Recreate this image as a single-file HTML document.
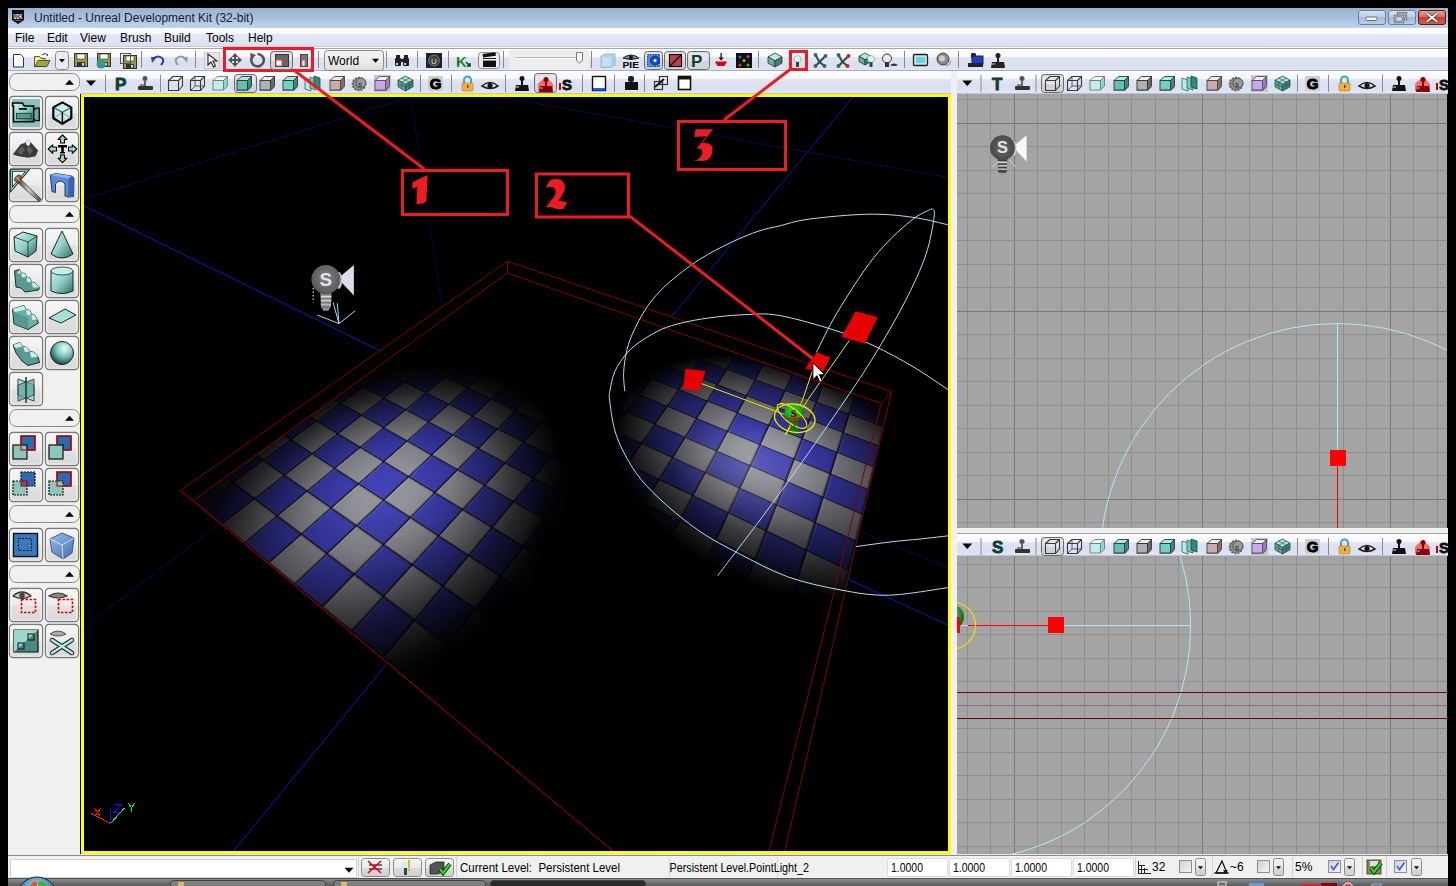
<!DOCTYPE html><html><head><meta charset="utf-8"><style>
html,body{margin:0;padding:0;width:1456px;height:886px;overflow:hidden;background:#000;font-family:"Liberation Sans",sans-serif;font-size:12px;color:#000}
.a{position:absolute;box-sizing:border-box}
.tb{background:linear-gradient(#fdfdfe 0,#f6f7fb 36%,#e2e6f3 38%,#dadfef 70%,#e1e6f3 100%)}
.sep{position:absolute;width:1px;background:#8c8c8c}
.pbtn{position:absolute;box-sizing:border-box;border:1px solid #8a8a8a;border-radius:3px;background:linear-gradient(#f4f4f4,#e4e4e4 55%,#d8d8d8)}
.hdr{position:absolute;box-sizing:border-box;border:1px solid #8f8f8f;border-radius:7px;background:#f0f0f0}
.txt{position:absolute;white-space:nowrap;line-height:1}
svg{position:absolute;overflow:visible}
</style></head><body>
<div class="a" style="left:8px;top:8px;width:1440px;height:20px;background:linear-gradient(#98b1ce,#bcd4ec)"></div>
<div class="txt" style="left:34px;top:12px;font-size:12px;color:#1a1a30">Untitled - Unreal Development Kit (32-bit)</div>
<div class="a" style="left:8px;top:28px;width:1440px;height:19px;background:linear-gradient(#ffffff 0,#f7f8fc 32%,#e3e7f3 36%,#dde2f1 100%);border-bottom:1px solid #c5cbe0"></div>
<div class="txt" style="left:15px;top:32px">File</div>
<div class="txt" style="left:47px;top:32px">Edit</div>
<div class="txt" style="left:80px;top:32px">View</div>
<div class="txt" style="left:120px;top:32px">Brush</div>
<div class="txt" style="left:164px;top:32px">Build</div>
<div class="txt" style="left:206px;top:32px">Tools</div>
<div class="txt" style="left:248px;top:32px">Help</div>
<div class="a" style="left:8px;top:47px;width:1440px;height:1px;background:#fbfbfb"></div>
<div class="a" style="left:8px;top:48px;width:1440px;height:1px;background:#a6a6a6"></div>
<div class="a tb" style="left:8px;top:49px;width:1440px;height:22px;"></div>
<div class="a" style="left:8px;top:70px;width:1440px;height:1px;background:#a9b0c4"></div>
<div class="a" style="left:8px;top:71px;width:72px;height:784px;background:#f0f0f0"></div>
<div class="a tb" style="left:80px;top:71px;width:871px;height:23px;border-bottom:1px solid #b9c4de"></div>
<div class="a" style="left:951px;top:71px;width:6px;height:784px;background:#f0f0f0"></div>
<div class="a tb" style="left:957px;top:71px;width:491px;height:23px;border-bottom:1px solid #b9c4de"></div>
<div class="a" style="left:957px;top:528px;width:491px;height:6px;background:#f0f0f0;border-bottom:1px solid #a0a0a0"></div>
<div class="a tb" style="left:957px;top:534px;width:491px;height:22px;border-bottom:1px solid #b9c4de"></div>
<svg width="80" height="800" style="left:0;top:60px" viewBox="0 60 80 800"><defs><linearGradient id="lbtn" x1="0" y1="0" x2="0" y2="1"><stop offset="0" stop-color="#f6f6f6"/><stop offset=".5" stop-color="#ececec"/><stop offset=".52" stop-color="#e2e2e2"/><stop offset="1" stop-color="#d8d8d8"/></linearGradient><linearGradient id="teal" x1="0" y1="0" x2="1" y2="1"><stop offset="0" stop-color="#d8f6f2"/><stop offset=".5" stop-color="#8ed0c6"/><stop offset="1" stop-color="#2a6a62"/></linearGradient><linearGradient id="pen" x1="0" y1="0" x2="1" y2="0"><stop offset="0" stop-color="#333"/><stop offset=".5" stop-color="#ccc"/><stop offset="1" stop-color="#444"/></linearGradient><radialGradient id="tealsph" cx="60%" cy="30%" r="70%"><stop offset="0" stop-color="#f0fffc"/><stop offset=".5" stop-color="#7ac8bc"/><stop offset="1" stop-color="#1a4a44"/></radialGradient><linearGradient id="blu" x1="0" y1="0" x2="1" y2="1"><stop offset="0" stop-color="#8ab8f0"/><stop offset="1" stop-color="#2a5aa8"/></linearGradient></defs><rect x="9.5" y="73.5" width="70" height="17" rx="7" fill="#f0f0f0" stroke="#8c8c8c"/><polygon points="65.0,84.75 74.0,84.75 69.5,79.75" fill="#000"/><rect x="9.5" y="205.5" width="70" height="17" rx="7" fill="#f0f0f0" stroke="#8c8c8c"/><polygon points="65.0,216.75 74.0,216.75 69.5,211.75" fill="#000"/><rect x="9.5" y="409.5" width="70" height="17" rx="7" fill="#f0f0f0" stroke="#8c8c8c"/><polygon points="65.0,420.75 74.0,420.75 69.5,415.75" fill="#000"/><rect x="9.5" y="505.5" width="70" height="17" rx="7" fill="#f0f0f0" stroke="#8c8c8c"/><polygon points="65.0,516.75 74.0,516.75 69.5,511.75" fill="#000"/><rect x="9.5" y="565.5" width="70" height="17" rx="7" fill="#f0f0f0" stroke="#8c8c8c"/><polygon points="65.0,576.75 74.0,576.75 69.5,571.75" fill="#000"/><rect x="9.5" y="96.5" width="33" height="33" rx="3.5" fill="url(#lbtn)" stroke="#7a7a7a" stroke-width="1.3"/><rect x="10.8" y="97.8" width="30.4" height="30.4" rx="2.5" fill="none" stroke="#fff" stroke-width=".8"/><rect x="45.5" y="96.5" width="33" height="33" rx="3.5" fill="url(#lbtn)" stroke="#7a7a7a" stroke-width="1.3"/><rect x="46.8" y="97.8" width="30.4" height="30.4" rx="2.5" fill="none" stroke="#fff" stroke-width=".8"/><rect x="9.5" y="132.5" width="33" height="33" rx="3.5" fill="url(#lbtn)" stroke="#7a7a7a" stroke-width="1.3"/><rect x="10.8" y="133.8" width="30.4" height="30.4" rx="2.5" fill="none" stroke="#fff" stroke-width=".8"/><rect x="45.5" y="132.5" width="33" height="33" rx="3.5" fill="url(#lbtn)" stroke="#7a7a7a" stroke-width="1.3"/><rect x="46.8" y="133.8" width="30.4" height="30.4" rx="2.5" fill="none" stroke="#fff" stroke-width=".8"/><rect x="9.5" y="168.5" width="33" height="33" rx="3.5" fill="url(#lbtn)" stroke="#7a7a7a" stroke-width="1.3"/><rect x="10.8" y="169.8" width="30.4" height="30.4" rx="2.5" fill="none" stroke="#fff" stroke-width=".8"/><rect x="45.5" y="168.5" width="33" height="33" rx="3.5" fill="url(#lbtn)" stroke="#7a7a7a" stroke-width="1.3"/><rect x="46.8" y="169.8" width="30.4" height="30.4" rx="2.5" fill="none" stroke="#fff" stroke-width=".8"/><rect x="9.5" y="228.5" width="33" height="33" rx="3.5" fill="url(#lbtn)" stroke="#7a7a7a" stroke-width="1.3"/><rect x="10.8" y="229.8" width="30.4" height="30.4" rx="2.5" fill="none" stroke="#fff" stroke-width=".8"/><rect x="45.5" y="228.5" width="33" height="33" rx="3.5" fill="url(#lbtn)" stroke="#7a7a7a" stroke-width="1.3"/><rect x="46.8" y="229.8" width="30.4" height="30.4" rx="2.5" fill="none" stroke="#fff" stroke-width=".8"/><rect x="9.5" y="264.5" width="33" height="33" rx="3.5" fill="url(#lbtn)" stroke="#7a7a7a" stroke-width="1.3"/><rect x="10.8" y="265.8" width="30.4" height="30.4" rx="2.5" fill="none" stroke="#fff" stroke-width=".8"/><rect x="45.5" y="264.5" width="33" height="33" rx="3.5" fill="url(#lbtn)" stroke="#7a7a7a" stroke-width="1.3"/><rect x="46.8" y="265.8" width="30.4" height="30.4" rx="2.5" fill="none" stroke="#fff" stroke-width=".8"/><rect x="9.5" y="300.5" width="33" height="33" rx="3.5" fill="url(#lbtn)" stroke="#7a7a7a" stroke-width="1.3"/><rect x="10.8" y="301.8" width="30.4" height="30.4" rx="2.5" fill="none" stroke="#fff" stroke-width=".8"/><rect x="45.5" y="300.5" width="33" height="33" rx="3.5" fill="url(#lbtn)" stroke="#7a7a7a" stroke-width="1.3"/><rect x="46.8" y="301.8" width="30.4" height="30.4" rx="2.5" fill="none" stroke="#fff" stroke-width=".8"/><rect x="9.5" y="336.5" width="33" height="33" rx="3.5" fill="url(#lbtn)" stroke="#7a7a7a" stroke-width="1.3"/><rect x="10.8" y="337.8" width="30.4" height="30.4" rx="2.5" fill="none" stroke="#fff" stroke-width=".8"/><rect x="45.5" y="336.5" width="33" height="33" rx="3.5" fill="url(#lbtn)" stroke="#7a7a7a" stroke-width="1.3"/><rect x="46.8" y="337.8" width="30.4" height="30.4" rx="2.5" fill="none" stroke="#fff" stroke-width=".8"/><rect x="9.5" y="372.5" width="33" height="33" rx="3.5" fill="url(#lbtn)" stroke="#7a7a7a" stroke-width="1.3"/><rect x="10.8" y="373.8" width="30.4" height="30.4" rx="2.5" fill="none" stroke="#fff" stroke-width=".8"/><rect x="9.5" y="432.5" width="33" height="33" rx="3.5" fill="url(#lbtn)" stroke="#7a7a7a" stroke-width="1.3"/><rect x="10.8" y="433.8" width="30.4" height="30.4" rx="2.5" fill="none" stroke="#fff" stroke-width=".8"/><rect x="45.5" y="432.5" width="33" height="33" rx="3.5" fill="url(#lbtn)" stroke="#7a7a7a" stroke-width="1.3"/><rect x="46.8" y="433.8" width="30.4" height="30.4" rx="2.5" fill="none" stroke="#fff" stroke-width=".8"/><rect x="9.5" y="468.5" width="33" height="33" rx="3.5" fill="url(#lbtn)" stroke="#7a7a7a" stroke-width="1.3"/><rect x="10.8" y="469.8" width="30.4" height="30.4" rx="2.5" fill="none" stroke="#fff" stroke-width=".8"/><rect x="45.5" y="468.5" width="33" height="33" rx="3.5" fill="url(#lbtn)" stroke="#7a7a7a" stroke-width="1.3"/><rect x="46.8" y="469.8" width="30.4" height="30.4" rx="2.5" fill="none" stroke="#fff" stroke-width=".8"/><rect x="9.5" y="528.5" width="33" height="33" rx="3.5" fill="url(#lbtn)" stroke="#7a7a7a" stroke-width="1.3"/><rect x="10.8" y="529.8" width="30.4" height="30.4" rx="2.5" fill="none" stroke="#fff" stroke-width=".8"/><rect x="45.5" y="528.5" width="33" height="33" rx="3.5" fill="url(#lbtn)" stroke="#7a7a7a" stroke-width="1.3"/><rect x="46.8" y="529.8" width="30.4" height="30.4" rx="2.5" fill="none" stroke="#fff" stroke-width=".8"/><rect x="9.5" y="588.5" width="33" height="33" rx="3.5" fill="url(#lbtn)" stroke="#7a7a7a" stroke-width="1.3"/><rect x="10.8" y="589.8" width="30.4" height="30.4" rx="2.5" fill="none" stroke="#fff" stroke-width=".8"/><rect x="45.5" y="588.5" width="33" height="33" rx="3.5" fill="url(#lbtn)" stroke="#7a7a7a" stroke-width="1.3"/><rect x="46.8" y="589.8" width="30.4" height="30.4" rx="2.5" fill="none" stroke="#fff" stroke-width=".8"/><rect x="9.5" y="624.5" width="33" height="33" rx="3.5" fill="url(#lbtn)" stroke="#7a7a7a" stroke-width="1.3"/><rect x="10.8" y="625.8" width="30.4" height="30.4" rx="2.5" fill="none" stroke="#fff" stroke-width=".8"/><rect x="45.5" y="624.5" width="33" height="33" rx="3.5" fill="url(#lbtn)" stroke="#7a7a7a" stroke-width="1.3"/><rect x="46.8" y="625.8" width="30.4" height="30.4" rx="2.5" fill="none" stroke="#fff" stroke-width=".8"/><rect x="12" y="99" width="28" height="28" fill="#8bc0bc"/><path d="M12.5,103 H22.3 L24.3,106 H33.7 V121.7 H13.5 V106 H12.5 Z" fill="url(#teal)" stroke="#000" stroke-width="1.6"/><rect x="18.9" y="108" width="8" height="1.8" fill="#000"/><rect x="16.5" y="113.3" width="14.5" height="5.5" fill="#5a9a90" stroke="#0a2a28" stroke-width=".8"/><rect x="30" y="108.5" width="1.3" height="1.3" fill="#20ff20"/><path d="M33.7,110 L36,108.2 H39.2 V120.7 H36 L33.7,119 Z" fill="#6aaaa0" stroke="#000" stroke-width="1.3"/><g fill="#9ad8d0" opacity=".7"><circle cx="53" cy="104" r=".6"/><circle cx="56" cy="101.5" r=".6"/><circle cx="60" cy="100" r=".6"/><circle cx="64" cy="100" r=".6"/><circle cx="68" cy="101.5" r=".6"/><circle cx="71" cy="104" r=".6"/><circle cx="53" cy="122" r=".6"/><circle cx="56" cy="124.5" r=".6"/><circle cx="60" cy="126" r=".6"/><circle cx="64" cy="126" r=".6"/><circle cx="68" cy="124.5" r=".6"/><circle cx="71" cy="122" r=".6"/></g><polygon points="62.4,102.4 71.3,107.4 71.3,118.2 62.4,123.7 53.3,118.2 53.3,107.4" fill="#c8ecea" stroke="#000" stroke-width="2.2" stroke-linejoin="round"/><g stroke="#1a4a46" stroke-width=".9"><line x1="53.3" y1="107.4" x2="62.4" y2="112"/><line x1="71.3" y1="107.4" x2="62.4" y2="112"/><line x1="62.4" y1="112" x2="62.4" y2="123.7"/><line x1="53.3" y1="118.2" x2="71.3" y2="107.4" opacity=".5"/><line x1="71.3" y1="118.2" x2="53.3" y2="107.4" opacity=".5"/></g><line x1="62.4" y1="112" x2="62.4" y2="123.7" stroke="#000" stroke-width="1.4"/><path d="M12.9,154.6 Q16,150 21,144 L24.3,143.2 L27.9,139.3 L31.6,143.2 L38.1,150.5 L35.6,156.2 L28.3,157.8 L18.6,156.2 Z" fill="#3a3a3a"/><path d="M17,152 L22,146 L25,150 L21,155 Z M28,145 L33,150 L30,155 L27,150Z" fill="#666" opacity=".8"/><path d="M25.5,142 L27.9,139.3 L30.5,142.5 L29,146 L26.5,145 Z" fill="#d8f4f2"/><g fill="#9ad8cc" stroke="#000" stroke-width="1.1" stroke-linejoin="round"><polygon points="62.5,135 67,139.5 64.5,139.5 64.5,143 60.5,143 60.5,139.5 58,139.5"/><polygon points="62.5,162.7 67,158.2 64.5,158.2 64.5,155 60.5,155 60.5,158.2 58,158.2"/><polygon points="48.2,149 52.7,144.8 52.7,147 56.5,147 56.5,151 52.7,151 52.7,153.4"/><polygon points="76.8,149 72.3,144.8 72.3,147 68.5,147 68.5,151 72.3,151 72.3,153.4"/></g><path d="M58,145 H67 V147.5 H63.8 V152 H65 V153.5 H60 V152 H61.2 V147.5 H58 Z" fill="#000"/><polygon points="11.5,170.5 27.5,170.5 11.5,189.5" fill="none" stroke="#000" stroke-width="2.6"/><polygon points="11.5,170.5 27.5,170.5 11.5,189.5" fill="none" stroke="#7cc8c0" stroke-width="1.3"/><path d="M17,182 L20,178.5 L41,199 L39,201.5 Z" fill="url(#pen)" stroke="#222" stroke-width=".6"/><ellipse cx="18" cy="178.5" rx="2.8" ry="4" transform="rotate(40 18 178.5)" fill="#a06040" stroke="#333" stroke-width=".7"/><line x1="16" y1="177" x2="20" y2="180.5" stroke="#e8d0b0" stroke-width=".8"/><path d="M50.3,175 L56,173.5 L71.4,176 L74,178 L73.5,196.5 L68,197 L65,196 L65,184 Q60,178 55.5,184 L55.5,192.5 L52,191.5 Z" fill="#5a8ad8" stroke="#1a2a48" stroke-width=".9" stroke-linejoin="round"/><path d="M71.4,176 L74,178 L73.5,196.5 L68,197 L68.5,178.5 Z" fill="#3a64a8"/><path d="M50.3,175 L56,173.5 L71.4,176 L68.5,178.5 Z" fill="#8ab4f0"/><polygon points="14,237 23,232 37,236 36,251 28,257 15,251" fill="url(#teal)" stroke="#1a2a28" stroke-width="1"/><polyline points="14,237 28,242 37,236" fill="none" stroke="#1a2a28" stroke-width=".8"/><line x1="28" y1="242" x2="28" y2="257" stroke="#1a2a28" stroke-width=".8"/><path d="M62,231 L51,254 Q62,262 73,254 Z" fill="url(#teal)" stroke="#1a2a28" stroke-width="1"/><path d="M14.5,271 L19.5,269.5 L21,273 L25,273.5 L26.5,277 L30,278 L31.5,282 L35,283 L39.5,287.5 L38.5,290 L25,292 L21,288 L16,287 Z" fill="#5a9a92" stroke="#1a2a28" stroke-width="1"/><path d="M19.5,269.5 L21,273 L17,274 Z M21,273 L25,273.5 L26.5,277 L22,277.5 Z M26.5,277 L30,278 L31.5,282 L27,282 Z M31.5,282 L35,283 L39.5,287.5 L33,287.5 Z" fill="#c8f0ea"/><path d="M51,271 Q62,266 73,271 L73,291 Q62,296 51,291 Z" fill="url(#teal)" stroke="#1a2a28" stroke-width="1"/><ellipse cx="62" cy="271" rx="11" ry="4" fill="#c8eee8" stroke="#1a2a28" stroke-width=".8"/><path d="M12.5,309 L24,305.5 L26,309.5 L30,310.5 L31.5,314.5 L35,315.5 L37,319.5 L38.5,323 L28,329.5 L14,324 Z" fill="#6ab0a6" stroke="#1a2a28" stroke-width="1"/><path d="M12.5,309 L24,305.5 L26,309.5 L15,312 Z M26,309.5 L30,310.5 L31.5,314.5 L27,315 Z M31.5,314.5 L35,315.5 L37,319.5 L32,320 Z" fill="#c8f0ea"/><path d="M14,312 L14,324 L28,329.5 L28,318 Z" fill="#4a8a82" opacity=".6"/><polygon points="49,318 65,309 76,315 61,323" fill="#a8e0d8" stroke="#1a2a28" stroke-width="1"/><path d="M13,345 L20,342.5 L23,346.5 L27,347.5 L30,351.5 L34.5,352.5 L38,357 L39.5,362.5 L28,365.5 L22,361 L16,353 Z" fill="#5a9a92" stroke="#1a2a28" stroke-width="1"/><path d="M13,345 L20,342.5 L23,346.5 L16,348 Z M23,346.5 L27,347.5 L30,351.5 L25,352 Z M30,351.5 L34.5,352.5 L38,357 L31,357.5 Z" fill="#c8f0ea"/><circle cx="62" cy="353" r="11.5" fill="url(#tealsph)" stroke="#1a2a28" stroke-width="1"/><polygon points="18,379 34,385 34,401 18,395" fill="#a8e0d8" opacity=".85" stroke="#1a2a28" stroke-width="1"/><polygon points="34,379 18,385 18,401 34,395" fill="#5aa89c" opacity=".75" stroke="#1a2a28" stroke-width="1"/><line x1="26" y1="377" x2="26" y2="403" stroke="#1a2a28" stroke-width="1.4"/><rect x="21" y="436" width="14" height="14" fill="#2a6ab0" stroke="#111" stroke-width="1.2" /><rect x="13" y="445" width="14" height="14" fill="#8ac8bc" stroke="#111" stroke-width="1.2" /><rect x="21" y="436" width="14" height="14" fill="none" stroke="#e00000" stroke-width="1.2"/><rect x="57" y="436" width="14" height="14" fill="#2a6ab0" stroke="#111" stroke-width="1.2" /><rect x="49" y="445" width="14" height="14" fill="#8ac8bc" stroke="#111" stroke-width="1.2" /><path d="M57,445 V436 H71 V450 H63" fill="none" stroke="#e00000" stroke-width="1.2"/><rect x="21" y="472" width="14" height="14" fill="#2a6ab0" stroke="#111" stroke-width="1.2" stroke-dasharray='2 1'/><rect x="13" y="481" width="14" height="14" fill="#8ac8bc" stroke="#111" stroke-width="1.2" stroke-dasharray='2 1'/><rect x="21" y="481" width="6" height="5" fill="#2a6ab0" stroke="#e00000" stroke-width="1.2"/><rect x="57" y="472" width="14" height="14" fill="#2a6ab0" stroke="#111" stroke-width="1.2" /><rect x="49" y="481" width="14" height="14" fill="#8ac8bc" stroke="#111" stroke-width="1.2" stroke-dasharray='2 1'/><rect x="57" y="472" width="14" height="14" fill="none" stroke="#e00000" stroke-width="1.2"/><rect x="13.5" y="533.5" width="24" height="23" fill="#3a78c0" stroke="#111" stroke-width="1.4"/><rect x="18.5" y="538.5" width="13" height="12" fill="none" stroke="#111" stroke-width="1" stroke-dasharray="2 1.5"/><path d="M50,539 L62,533 L74,538 L72,553 L63,559 L52,552 Z" fill="url(#blu)" opacity=".85" stroke="#2a3a5a" stroke-width="1"/><polyline points="50,539 62,545 74,538" fill="none" stroke="#e0f0ff" stroke-width=".8"/><line x1="62" y1="545" x2="63" y2="559" stroke="#e0f0ff" stroke-width=".8"/><path d="M13,596 Q22,588 31,596 Q22,601 13,596Z" fill="#ccc" stroke="#333" stroke-width="1.2"/><circle cx="22" cy="595.5" r="2.8" fill="#444"/><rect x="21.5" y="599.5" width="14" height="13" fill="none" stroke="#e00000" stroke-width="1.6" stroke-dasharray="2.5 1.5"/><path d="M49,596 Q58,590 67,596 Q58,600 49,596Z" fill="#888" stroke="#333" stroke-width="1.2"/><rect x="58.5" y="599.5" width="14" height="13" fill="none" stroke="#e00000" stroke-width="1.6" stroke-dasharray="2.5 1.5"/><polygon points="14,630 38,630 38,652 14,652" fill="#4a8a84" stroke="#111" stroke-width="1.2"/><polygon points="14,630 38,630 14,652" fill="#9ad8cc"/><rect x="28" y="634" width="6" height="6" fill="none" stroke="#111" stroke-width="1"/><rect x="18" y="643" width="6" height="6" fill="none" stroke="#111" stroke-width="1"/><path d="M50,634 Q58,628 66,634 Q58,638 50,634Z" fill="#aaa" stroke="#555" stroke-width="1"/><g stroke="#1a2a28" stroke-width="4.5" stroke-linecap="round"><line x1="52" y1="640" x2="72" y2="653"/><line x1="72" y1="640" x2="52" y2="653"/></g><g stroke="#b8e8e0" stroke-width="2.5" stroke-linecap="round"><line x1="52" y1="640" x2="72" y2="653"/><line x1="72" y1="640" x2="52" y2="653"/></g></svg>
<svg width="1456" height="100" style="left:0;top:0" viewBox="0 0 1456 100"><polygon points="86.0,80.5 96.0,80.5 91.0,86.0" fill="#000"/><rect x="105" y="75" width="1" height="17" fill="#8a8a8a"/><text x="115" y="89.5" font-family="Liberation Sans" font-weight="bold" font-size="17" fill="#0d3f30" stroke="#0d3f30" stroke-width="0.8">P</text><circle cx="145" cy="78.5" r="2.5" fill="#555"/><rect x="144" y="80" width="2" height="6" fill="#666"/><rect x="138" y="86" width="15" height="4" rx="1" fill="#333"/><rect x="140" y="84" width="4" height="2" fill="#888"/><rect x="160" y="75" width="1" height="17" fill="#8a8a8a"/><rect x="234.5" y="74.5" width="22" height="18" rx="3" fill="#d0d3da" stroke="#6d6d6d" stroke-width="1"/><rect x="235.5" y="75.5" width="20" height="8.5" rx="2" fill="#e4e6ea"/><g fill="none" stroke="#3a3a3a" stroke-width="1.1" stroke-linejoin="round"><path d="M168.5,80.5 L173,76.5 H182.5 V86 L178.5,90.5 H168.5 Z"/><path d="M168.5,80.5 H178.5 L182.5,76.5 M178.5,80.5 V90.5"/></g><g fill="none" stroke="#3a3a3a" stroke-width="1.1" stroke-linejoin="round"><path d="M190.5,80.5 L195,76.5 H204.5 V86 L200.5,90.5 H190.5 Z"/><path d="M190.5,80.5 H200.5 L204.5,76.5 M200.5,80.5 V90.5"/></g><g fill="none" stroke="#3a3a3a" stroke-width=".8"><path d="M195,76.5 V86 H204.5 M195,86 L190.5,90.5"/></g><polygon points="213,80.5 217.5,76.5 227.5,76.5 223.5,80.5" fill="#e8fffc" stroke="#777" stroke-width=".9" stroke-linejoin="round"/><polygon points="223.5,80.5 227.5,76.5 227.5,86.0 223.5,90.0" fill="#8ad8d0" stroke="#777" stroke-width=".9" stroke-linejoin="round"/><rect x="213" y="80.5" width="10.5" height="9.5" fill="#bdf0ea" stroke="#777" stroke-width=".9"/><polygon points="236,91.0 248.0,91.0 252.0,87.0 240.0,87.0" fill="#505050" opacity=".55"/><polygon points="237,80.5 241.5,76.5 251.5,76.5 247.5,80.5" fill="#a8ece4" stroke="#333" stroke-width=".9" stroke-linejoin="round"/><polygon points="247.5,80.5 251.5,76.5 251.5,86.0 247.5,90.0" fill="#3a8a80" stroke="#333" stroke-width=".9" stroke-linejoin="round"/><rect x="237" y="80.5" width="10.5" height="9.5" fill="#60c0b4" stroke="#333" stroke-width=".9"/><polygon points="259,91.0 271.0,91.0 275.0,87.0 263.0,87.0" fill="#505050" opacity=".55"/><polygon points="260,80.5 264.5,76.5 274.5,76.5 270.5,80.5" fill="#f0f0f0" stroke="#333" stroke-width=".9" stroke-linejoin="round"/><polygon points="270.5,80.5 274.5,76.5 274.5,86.0 270.5,90.0" fill="#6a6a6a" stroke="#333" stroke-width=".9" stroke-linejoin="round"/><rect x="260" y="80.5" width="10.5" height="9.5" fill="#b0b0b0" stroke="#333" stroke-width=".9"/><polygon points="282,91.0 294.0,91.0 298.0,87.0 286.0,87.0" fill="#505050" opacity=".55"/><polygon points="283,80.5 287.5,76.5 297.5,76.5 293.5,80.5" fill="#a8ece4" stroke="#333" stroke-width=".9" stroke-linejoin="round"/><polygon points="293.5,80.5 297.5,76.5 297.5,86.0 293.5,90.0" fill="#3a8a80" stroke="#333" stroke-width=".9" stroke-linejoin="round"/><rect x="283" y="80.5" width="10.5" height="9.5" fill="#70d0c4" stroke="#333" stroke-width=".9"/><polygon points="305,78 311,80 311,91 305,89" fill="#bfe8e0" stroke="#2a6a60" stroke-width=".8"/><polygon points="310,77 316,79 316,90 310,88" fill="#7cc8bc" stroke="#2a6a60" stroke-width=".8"/><polygon points="314,76 320,78 320,89 314,87" fill="#2f8a7c" stroke="#1a4a40" stroke-width=".8"/><polygon points="329,91.0 341.0,91.0 345.0,87.0 333.0,87.0" fill="#505050" opacity=".55"/><polygon points="330,80.5 334.5,76.5 344.5,76.5 340.5,80.5" fill="#f4e8e8" stroke="#444" stroke-width=".9" stroke-linejoin="round"/><polygon points="340.5,80.5 344.5,76.5 344.5,86.0 340.5,90.0" fill="#8a6a6a" stroke="#444" stroke-width=".9" stroke-linejoin="round"/><rect x="330" y="80.5" width="10.5" height="9.5" fill="#c8acac" stroke="#444" stroke-width=".9"/><circle cx="359" cy="84" r="6.5" fill="#8a8a8a" stroke="#555" stroke-width="1.5" stroke-dasharray="2 1.2"/><circle cx="361" cy="83" r="5" fill="#9a9a9a" stroke="#555" stroke-width="1"/><text x="360" y="87" font-size="8" font-family="Liberation Sans" text-anchor="middle" fill="#222">s</text><rect x="374" y="75" width="17" height="17" fill="#c8c8c8"/><polygon points="374,91.0 386.0,91.0 390.0,87.0 378.0,87.0" fill="#505050" opacity=".55"/><polygon points="375,80.5 379.5,76.5 389.5,76.5 385.5,80.5" fill="#f4e8ff" stroke="#555" stroke-width=".9" stroke-linejoin="round"/><polygon points="385.5,80.5 389.5,76.5 389.5,86.0 385.5,90.0" fill="#9a78c8" stroke="#555" stroke-width=".9" stroke-linejoin="round"/><rect x="375" y="80.5" width="10.5" height="9.5" fill="#c8a8ec" stroke="#555" stroke-width=".9"/><polygon points="405.5,76 413,80.2 405.5,84.4 398,80.2" fill="#aee0d8" stroke="#2a4a44" stroke-width=".8"/><polygon points="398,80.2 405.5,84.4 405.5,91 398,86.8" fill="#5aa89c" stroke="#2a4a44" stroke-width=".8"/><polygon points="405.5,84.4 413,80.2 413,86.8 405.5,91" fill="#3a887c" stroke="#2a4a44" stroke-width=".8"/><g stroke="#2a4a44" stroke-width=".6"><line x1="401.75" y1="78.1" x2="409.25" y2="82.3"/><line x1="409.25" y1="78.1" x2="401.75" y2="82.3"/><line x1="401.75" y1="82.3" x2="401.75" y2="88.9"/><line x1="398" y1="84" x2="405.5" y2="87"/><line x1="409.25" y1="82.3" x2="409.25" y2="88.9"/><line x1="405.5" y1="87" x2="413" y2="84"/></g><rect x="420" y="75" width="1" height="17" fill="#8a8a8a"/><rect x="428" y="76" width="15" height="15" fill="#cfcfcf"/><text x="435.5" y="89" font-family="Liberation Sans" font-weight="bold" font-size="15" text-anchor="middle" fill="#000" stroke="#000" stroke-width="1">G</text><rect x="451" y="75" width="1" height="17" fill="#8a8a8a"/><path d="M464,83 v-3 a3.5,3.5 0 0 1 7,0 v3" fill="none" stroke="#3aa0e0" stroke-width="2"/><rect x="462" y="83" width="11" height="8" rx="1" fill="#f0b040" stroke="#c07810" stroke-width=".6"/><rect x="467" y="85" width="1.5" height="3" fill="#6a4000"/><path d="M482,86 Q490,79 498,86 Q490,91 482,86 Z" fill="#e8e8e8" stroke="#222" stroke-width="1.6"/><circle cx="490" cy="85.5" r="2.6" fill="#111"/><rect x="505" y="75" width="1" height="17" fill="#8a8a8a"/><circle cx="522" cy="78.5" r="2.5" fill="#111"/><rect x="521" y="80" width="2" height="6" fill="#111"/><path d="M515,91 L516,85 L528,85 L529,91 Z" fill="#111"/><rect x="516" y="86" width="3" height="2" fill="#777"/><rect x="534.5" y="73.5" width="22" height="19" rx="3" fill="#d0d3da" stroke="#6d6d6d" stroke-width="1"/><rect x="535.5" y="74.5" width="20" height="9.0" rx="2" fill="#e4e6ea"/><path d="M538,91 L538,84 Q545.5,74 553,84 L553,91 Z" fill="#f07070"/><circle cx="546" cy="79.5" r="2.5" fill="#8a0000"/><rect x="545" y="81" width="2" height="6" fill="#8a0000"/><path d="M539,92 L540,86 L552,86 L553,92 Z" fill="#8a0000"/><rect x="540" y="87" width="3" height="2" fill="#777"/><rect x="559" y="83" width="2" height="7" fill="#c00000"/><text x="562" y="89.5" font-family="Liberation Sans" font-weight="bold" font-size="15" fill="#111" stroke="#111" stroke-width="0.8">S</text><rect x="582" y="75" width="1" height="17" fill="#8a8a8a"/><rect x="592.5" y="76.5" width="13" height="14" fill="#fff" stroke="#111" stroke-width="1.4"/><rect x="593" y="88" width="12" height="2.5" fill="#2060e0"/><rect x="614" y="75" width="1" height="17" fill="#8a8a8a"/><rect x="628" y="76" width="6" height="6" rx="2" fill="#222"/><rect x="625" y="82" width="13" height="8" fill="#111"/><rect x="644" y="75" width="1" height="17" fill="#8a8a8a"/><rect x="654.5" y="81.5" width="8" height="8" fill="none" stroke="#333" stroke-width="1.2"/><rect x="659.5" y="76.5" width="8" height="8" fill="none" stroke="#333" stroke-width="1.2"/><path d="M655,87 L664,79" stroke="#111" stroke-width="2"/><rect x="678.5" y="76.5" width="12" height="13" fill="#fff" stroke="#111" stroke-width="1.6"/><rect x="678.5" y="76.5" width="12" height="3" fill="#111"/><polygon points="962.25,80.5 972.25,80.5 967.25,86.0" fill="#000"/><rect x="980.5" y="75" width="1" height="17" fill="#8a8a8a"/><text x="992" y="89.5" font-family="Liberation Sans" font-weight="bold" font-size="17" fill="#0d3f30" stroke="#0d3f30" stroke-width="0.8">T</text><circle cx="1022" cy="78.5" r="2.5" fill="#555"/><rect x="1021" y="80" width="2" height="6" fill="#666"/><rect x="1015" y="86" width="15" height="4" rx="1" fill="#333"/><rect x="1017" y="84" width="4" height="2" fill="#888"/><rect x="1035.5" y="75" width="1" height="17" fill="#8a8a8a"/><rect x="1041.5" y="74.5" width="22" height="18" rx="3" fill="#d0d3da" stroke="#6d6d6d" stroke-width="1"/><rect x="1042.5" y="75.5" width="20" height="8.5" rx="2" fill="#e4e6ea"/><g fill="none" stroke="#3a3a3a" stroke-width="1.1" stroke-linejoin="round"><path d="M1045.5,80.5 L1050,76.5 H1059.5 V86 L1055.5,90.5 H1045.5 Z"/><path d="M1045.5,80.5 H1055.5 L1059.5,76.5 M1055.5,80.5 V90.5"/></g><g fill="none" stroke="#3a3a3a" stroke-width="1.1" stroke-linejoin="round"><path d="M1067.5,80.5 L1072,76.5 H1081.5 V86 L1077.5,90.5 H1067.5 Z"/><path d="M1067.5,80.5 H1077.5 L1081.5,76.5 M1077.5,80.5 V90.5"/></g><g fill="none" stroke="#3a3a3a" stroke-width=".8"><path d="M1072,76.5 V86 H1081.5 M1072,86 L1067.5,90.5"/></g><polygon points="1090,80.5 1094.5,76.5 1104.5,76.5 1100.5,80.5" fill="#e8fffc" stroke="#777" stroke-width=".9" stroke-linejoin="round"/><polygon points="1100.5,80.5 1104.5,76.5 1104.5,86.0 1100.5,90.0" fill="#8ad8d0" stroke="#777" stroke-width=".9" stroke-linejoin="round"/><rect x="1090" y="80.5" width="10.5" height="9.5" fill="#bdf0ea" stroke="#777" stroke-width=".9"/><polygon points="1113,91.0 1125.0,91.0 1129.0,87.0 1117.0,87.0" fill="#505050" opacity=".55"/><polygon points="1114,80.5 1118.5,76.5 1128.5,76.5 1124.5,80.5" fill="#a8ece4" stroke="#333" stroke-width=".9" stroke-linejoin="round"/><polygon points="1124.5,80.5 1128.5,76.5 1128.5,86.0 1124.5,90.0" fill="#3a8a80" stroke="#333" stroke-width=".9" stroke-linejoin="round"/><rect x="1114" y="80.5" width="10.5" height="9.5" fill="#60c0b4" stroke="#333" stroke-width=".9"/><polygon points="1136,91.0 1148.0,91.0 1152.0,87.0 1140.0,87.0" fill="#505050" opacity=".55"/><polygon points="1137,80.5 1141.5,76.5 1151.5,76.5 1147.5,80.5" fill="#f0f0f0" stroke="#333" stroke-width=".9" stroke-linejoin="round"/><polygon points="1147.5,80.5 1151.5,76.5 1151.5,86.0 1147.5,90.0" fill="#6a6a6a" stroke="#333" stroke-width=".9" stroke-linejoin="round"/><rect x="1137" y="80.5" width="10.5" height="9.5" fill="#b0b0b0" stroke="#333" stroke-width=".9"/><polygon points="1159,91.0 1171.0,91.0 1175.0,87.0 1163.0,87.0" fill="#505050" opacity=".55"/><polygon points="1160,80.5 1164.5,76.5 1174.5,76.5 1170.5,80.5" fill="#a8ece4" stroke="#333" stroke-width=".9" stroke-linejoin="round"/><polygon points="1170.5,80.5 1174.5,76.5 1174.5,86.0 1170.5,90.0" fill="#3a8a80" stroke="#333" stroke-width=".9" stroke-linejoin="round"/><rect x="1160" y="80.5" width="10.5" height="9.5" fill="#70d0c4" stroke="#333" stroke-width=".9"/><polygon points="1182,78 1188,80 1188,91 1182,89" fill="#bfe8e0" stroke="#2a6a60" stroke-width=".8"/><polygon points="1187,77 1193,79 1193,90 1187,88" fill="#7cc8bc" stroke="#2a6a60" stroke-width=".8"/><polygon points="1191,76 1197,78 1197,89 1191,87" fill="#2f8a7c" stroke="#1a4a40" stroke-width=".8"/><polygon points="1206,91.0 1218.0,91.0 1222.0,87.0 1210.0,87.0" fill="#505050" opacity=".55"/><polygon points="1207,80.5 1211.5,76.5 1221.5,76.5 1217.5,80.5" fill="#f4e8e8" stroke="#444" stroke-width=".9" stroke-linejoin="round"/><polygon points="1217.5,80.5 1221.5,76.5 1221.5,86.0 1217.5,90.0" fill="#8a6a6a" stroke="#444" stroke-width=".9" stroke-linejoin="round"/><rect x="1207" y="80.5" width="10.5" height="9.5" fill="#c8acac" stroke="#444" stroke-width=".9"/><circle cx="1236" cy="84" r="6.5" fill="#8a8a8a" stroke="#555" stroke-width="1.5" stroke-dasharray="2 1.2"/><circle cx="1238" cy="83" r="5" fill="#9a9a9a" stroke="#555" stroke-width="1"/><text x="1237" y="87" font-size="8" font-family="Liberation Sans" text-anchor="middle" fill="#222">s</text><rect x="1251" y="75" width="17" height="17" fill="#c8c8c8"/><polygon points="1251,91.0 1263.0,91.0 1267.0,87.0 1255.0,87.0" fill="#505050" opacity=".55"/><polygon points="1252,80.5 1256.5,76.5 1266.5,76.5 1262.5,80.5" fill="#f4e8ff" stroke="#555" stroke-width=".9" stroke-linejoin="round"/><polygon points="1262.5,80.5 1266.5,76.5 1266.5,86.0 1262.5,90.0" fill="#9a78c8" stroke="#555" stroke-width=".9" stroke-linejoin="round"/><rect x="1252" y="80.5" width="10.5" height="9.5" fill="#c8a8ec" stroke="#555" stroke-width=".9"/><polygon points="1282.5,76 1290,80.2 1282.5,84.4 1275,80.2" fill="#aee0d8" stroke="#2a4a44" stroke-width=".8"/><polygon points="1275,80.2 1282.5,84.4 1282.5,91 1275,86.8" fill="#5aa89c" stroke="#2a4a44" stroke-width=".8"/><polygon points="1282.5,84.4 1290,80.2 1290,86.8 1282.5,91" fill="#3a887c" stroke="#2a4a44" stroke-width=".8"/><g stroke="#2a4a44" stroke-width=".6"><line x1="1278.75" y1="78.1" x2="1286.25" y2="82.3"/><line x1="1286.25" y1="78.1" x2="1278.75" y2="82.3"/><line x1="1278.75" y1="82.3" x2="1278.75" y2="88.9"/><line x1="1275" y1="84" x2="1282.5" y2="87"/><line x1="1286.25" y1="82.3" x2="1286.25" y2="88.9"/><line x1="1282.5" y1="87" x2="1290" y2="84"/></g><rect x="1297" y="75" width="1" height="17" fill="#8a8a8a"/><rect x="1305" y="76" width="15" height="15" fill="#cfcfcf"/><text x="1312.5" y="89" font-family="Liberation Sans" font-weight="bold" font-size="15" text-anchor="middle" fill="#000" stroke="#000" stroke-width="1">G</text><rect x="1328" y="75" width="1" height="17" fill="#8a8a8a"/><path d="M1341,83 v-3 a3.5,3.5 0 0 1 7,0 v3" fill="none" stroke="#3aa0e0" stroke-width="2"/><rect x="1339" y="83" width="11" height="8" rx="1" fill="#f0b040" stroke="#c07810" stroke-width=".6"/><rect x="1344" y="85" width="1.5" height="3" fill="#6a4000"/><path d="M1359,86 Q1367,79 1375,86 Q1367,91 1359,86 Z" fill="#e8e8e8" stroke="#222" stroke-width="1.6"/><circle cx="1367" cy="85.5" r="2.6" fill="#111"/><rect x="1382" y="75" width="1" height="17" fill="#8a8a8a"/><circle cx="1399" cy="78.5" r="2.5" fill="#111"/><rect x="1398" y="80" width="2" height="6" fill="#111"/><path d="M1392,91 L1393,85 L1405,85 L1406,91 Z" fill="#111"/><rect x="1393" y="86" width="3" height="2" fill="#777"/><path d="M1415,91 L1415,84 Q1422.5,74 1430,84 L1430,91 Z" fill="#f07070"/><circle cx="1423" cy="79.5" r="2.5" fill="#8a0000"/><rect x="1422" y="81" width="2" height="6" fill="#8a0000"/><path d="M1416,92 L1417,86 L1429,86 L1430,92 Z" fill="#8a0000"/><rect x="1417" y="87" width="3" height="2" fill="#777"/><rect x="1436" y="83" width="2" height="7" fill="#c00000"/><text x="1439" y="89.5" font-family="Liberation Sans" font-weight="bold" font-size="15" fill="#111" stroke="#111" stroke-width="0.8">S</text></svg><svg width="491" height="30" style="left:957px;top:530px" viewBox="957 530 491 30"><polygon points="962.25,543.5 972.25,543.5 967.25,549.0" fill="#000"/><rect x="980.5" y="538" width="1" height="17" fill="#8a8a8a"/><text x="992" y="552.5" font-family="Liberation Sans" font-weight="bold" font-size="17" fill="#0d3f30" stroke="#0d3f30" stroke-width="0.8">S</text><circle cx="1022" cy="541.5" r="2.5" fill="#555"/><rect x="1021" y="543" width="2" height="6" fill="#666"/><rect x="1015" y="549" width="15" height="4" rx="1" fill="#333"/><rect x="1017" y="547" width="4" height="2" fill="#888"/><rect x="1035.5" y="538" width="1" height="17" fill="#8a8a8a"/><rect x="1041.5" y="537.5" width="22" height="18" rx="3" fill="#d0d3da" stroke="#6d6d6d" stroke-width="1"/><rect x="1042.5" y="538.5" width="20" height="8.5" rx="2" fill="#e4e6ea"/><g fill="none" stroke="#3a3a3a" stroke-width="1.1" stroke-linejoin="round"><path d="M1045.5,543.5 L1050,539.5 H1059.5 V549 L1055.5,553.5 H1045.5 Z"/><path d="M1045.5,543.5 H1055.5 L1059.5,539.5 M1055.5,543.5 V553.5"/></g><g fill="none" stroke="#3a3a3a" stroke-width="1.1" stroke-linejoin="round"><path d="M1067.5,543.5 L1072,539.5 H1081.5 V549 L1077.5,553.5 H1067.5 Z"/><path d="M1067.5,543.5 H1077.5 L1081.5,539.5 M1077.5,543.5 V553.5"/></g><g fill="none" stroke="#3a3a3a" stroke-width=".8"><path d="M1072,539.5 V549 H1081.5 M1072,549 L1067.5,553.5"/></g><polygon points="1090,543.5 1094.5,539.5 1104.5,539.5 1100.5,543.5" fill="#e8fffc" stroke="#777" stroke-width=".9" stroke-linejoin="round"/><polygon points="1100.5,543.5 1104.5,539.5 1104.5,549.0 1100.5,553.0" fill="#8ad8d0" stroke="#777" stroke-width=".9" stroke-linejoin="round"/><rect x="1090" y="543.5" width="10.5" height="9.5" fill="#bdf0ea" stroke="#777" stroke-width=".9"/><polygon points="1113,554.0 1125.0,554.0 1129.0,550.0 1117.0,550.0" fill="#505050" opacity=".55"/><polygon points="1114,543.5 1118.5,539.5 1128.5,539.5 1124.5,543.5" fill="#a8ece4" stroke="#333" stroke-width=".9" stroke-linejoin="round"/><polygon points="1124.5,543.5 1128.5,539.5 1128.5,549.0 1124.5,553.0" fill="#3a8a80" stroke="#333" stroke-width=".9" stroke-linejoin="round"/><rect x="1114" y="543.5" width="10.5" height="9.5" fill="#60c0b4" stroke="#333" stroke-width=".9"/><polygon points="1136,554.0 1148.0,554.0 1152.0,550.0 1140.0,550.0" fill="#505050" opacity=".55"/><polygon points="1137,543.5 1141.5,539.5 1151.5,539.5 1147.5,543.5" fill="#f0f0f0" stroke="#333" stroke-width=".9" stroke-linejoin="round"/><polygon points="1147.5,543.5 1151.5,539.5 1151.5,549.0 1147.5,553.0" fill="#6a6a6a" stroke="#333" stroke-width=".9" stroke-linejoin="round"/><rect x="1137" y="543.5" width="10.5" height="9.5" fill="#b0b0b0" stroke="#333" stroke-width=".9"/><polygon points="1159,554.0 1171.0,554.0 1175.0,550.0 1163.0,550.0" fill="#505050" opacity=".55"/><polygon points="1160,543.5 1164.5,539.5 1174.5,539.5 1170.5,543.5" fill="#a8ece4" stroke="#333" stroke-width=".9" stroke-linejoin="round"/><polygon points="1170.5,543.5 1174.5,539.5 1174.5,549.0 1170.5,553.0" fill="#3a8a80" stroke="#333" stroke-width=".9" stroke-linejoin="round"/><rect x="1160" y="543.5" width="10.5" height="9.5" fill="#70d0c4" stroke="#333" stroke-width=".9"/><polygon points="1182,541 1188,543 1188,554 1182,552" fill="#bfe8e0" stroke="#2a6a60" stroke-width=".8"/><polygon points="1187,540 1193,542 1193,553 1187,551" fill="#7cc8bc" stroke="#2a6a60" stroke-width=".8"/><polygon points="1191,539 1197,541 1197,552 1191,550" fill="#2f8a7c" stroke="#1a4a40" stroke-width=".8"/><polygon points="1206,554.0 1218.0,554.0 1222.0,550.0 1210.0,550.0" fill="#505050" opacity=".55"/><polygon points="1207,543.5 1211.5,539.5 1221.5,539.5 1217.5,543.5" fill="#f4e8e8" stroke="#444" stroke-width=".9" stroke-linejoin="round"/><polygon points="1217.5,543.5 1221.5,539.5 1221.5,549.0 1217.5,553.0" fill="#8a6a6a" stroke="#444" stroke-width=".9" stroke-linejoin="round"/><rect x="1207" y="543.5" width="10.5" height="9.5" fill="#c8acac" stroke="#444" stroke-width=".9"/><circle cx="1236" cy="547" r="6.5" fill="#8a8a8a" stroke="#555" stroke-width="1.5" stroke-dasharray="2 1.2"/><circle cx="1238" cy="546" r="5" fill="#9a9a9a" stroke="#555" stroke-width="1"/><text x="1237" y="550" font-size="8" font-family="Liberation Sans" text-anchor="middle" fill="#222">s</text><rect x="1251" y="538" width="17" height="17" fill="#c8c8c8"/><polygon points="1251,554.0 1263.0,554.0 1267.0,550.0 1255.0,550.0" fill="#505050" opacity=".55"/><polygon points="1252,543.5 1256.5,539.5 1266.5,539.5 1262.5,543.5" fill="#f4e8ff" stroke="#555" stroke-width=".9" stroke-linejoin="round"/><polygon points="1262.5,543.5 1266.5,539.5 1266.5,549.0 1262.5,553.0" fill="#9a78c8" stroke="#555" stroke-width=".9" stroke-linejoin="round"/><rect x="1252" y="543.5" width="10.5" height="9.5" fill="#c8a8ec" stroke="#555" stroke-width=".9"/><polygon points="1282.5,539 1290,543.2 1282.5,547.4 1275,543.2" fill="#aee0d8" stroke="#2a4a44" stroke-width=".8"/><polygon points="1275,543.2 1282.5,547.4 1282.5,554 1275,549.8" fill="#5aa89c" stroke="#2a4a44" stroke-width=".8"/><polygon points="1282.5,547.4 1290,543.2 1290,549.8 1282.5,554" fill="#3a887c" stroke="#2a4a44" stroke-width=".8"/><g stroke="#2a4a44" stroke-width=".6"><line x1="1278.75" y1="541.1" x2="1286.25" y2="545.3"/><line x1="1286.25" y1="541.1" x2="1278.75" y2="545.3"/><line x1="1278.75" y1="545.3" x2="1278.75" y2="551.9"/><line x1="1275" y1="547" x2="1282.5" y2="550"/><line x1="1286.25" y1="545.3" x2="1286.25" y2="551.9"/><line x1="1282.5" y1="550" x2="1290" y2="547"/></g><rect x="1297" y="538" width="1" height="17" fill="#8a8a8a"/><rect x="1305" y="539" width="15" height="15" fill="#cfcfcf"/><text x="1312.5" y="552" font-family="Liberation Sans" font-weight="bold" font-size="15" text-anchor="middle" fill="#000" stroke="#000" stroke-width="1">G</text><rect x="1328" y="538" width="1" height="17" fill="#8a8a8a"/><path d="M1341,546 v-3 a3.5,3.5 0 0 1 7,0 v3" fill="none" stroke="#3aa0e0" stroke-width="2"/><rect x="1339" y="546" width="11" height="8" rx="1" fill="#f0b040" stroke="#c07810" stroke-width=".6"/><rect x="1344" y="548" width="1.5" height="3" fill="#6a4000"/><path d="M1359,549 Q1367,542 1375,549 Q1367,554 1359,549 Z" fill="#e8e8e8" stroke="#222" stroke-width="1.6"/><circle cx="1367" cy="548.5" r="2.6" fill="#111"/><rect x="1382" y="538" width="1" height="17" fill="#8a8a8a"/><circle cx="1399" cy="541.5" r="2.5" fill="#111"/><rect x="1398" y="543" width="2" height="6" fill="#111"/><path d="M1392,554 L1393,548 L1405,548 L1406,554 Z" fill="#111"/><rect x="1393" y="549" width="3" height="2" fill="#777"/><path d="M1415,554 L1415,547 Q1422.5,537 1430,547 L1430,554 Z" fill="#f07070"/><circle cx="1423" cy="542.5" r="2.5" fill="#8a0000"/><rect x="1422" y="544" width="2" height="6" fill="#8a0000"/><path d="M1416,555 L1417,549 L1429,549 L1430,555 Z" fill="#8a0000"/><rect x="1417" y="550" width="3" height="2" fill="#777"/><rect x="1436" y="546" width="2" height="7" fill="#c00000"/><text x="1439" y="552.5" font-family="Liberation Sans" font-weight="bold" font-size="15" fill="#111" stroke="#111" stroke-width="0.8">S</text></svg>
<svg width="1456" height="75" style="left:0;top:0" viewBox="0 0 1456 75"><defs><linearGradient id="combo" x1="0" y1="0" x2="0" y2="1"><stop offset="0" stop-color="#f4f4f4"/><stop offset=".5" stop-color="#ececec"/><stop offset="1" stop-color="#dcdcdc"/></linearGradient></defs><path d="M13.5,54.5 h7 l3,3 v9.5 h-10 z" fill="#fff" stroke="#333" stroke-width="1"/><path d="M34.5,56.5 h5 l1.5,2 h4 v8 h-10.5 z" fill="#f4f070" stroke="#333" stroke-width=".8"/><path d="M35,66.5 l3,-6 h12 l-3,6 z" fill="#a8a048" stroke="#333" stroke-width=".8"/><path d="M42,55 q3,-3 6,0 l-1,1" fill="none" stroke="#333" stroke-width="1"/><rect x="55.5" y="51.5" width="13" height="18" rx="3" fill="#ececec" stroke="#8a8a8a" stroke-width="1"/><polygon points="59,59.0 65,59.0 62,62.5" fill="#000"/><rect x="74.5" y="53.5" width="13" height="13" fill="#9a9a40" stroke="#333" stroke-width="1"/><rect x="77" y="54" width="8" height="5" fill="#fff" stroke="#333" stroke-width=".6"/><rect x="77" y="62" width="8" height="4.5" fill="#333"/><rect x="82" y="63" width="2" height="2.5" fill="#ddd"/><rect x="97.5" y="53.5" width="13" height="13" fill="#9a9a40" stroke="#333" stroke-width="1"/><rect x="100" y="54" width="8" height="5" fill="#fff" stroke="#333" stroke-width=".6"/><rect x="100" y="62" width="8" height="4.5" fill="#333"/><rect x="105" y="63" width="2" height="2.5" fill="#ddd"/><circle cx="101" cy="64" r="4.5" fill="#3a9a8a"/><rect x="123.5" y="55.5" width="13" height="13" fill="#9a9a40" stroke="#333" stroke-width="1"/><rect x="126" y="56" width="8" height="5" fill="#fff" stroke="#333" stroke-width=".6"/><rect x="126" y="64" width="8" height="4.5" fill="#333"/><rect x="131" y="65" width="2" height="2.5" fill="#ddd"/><rect x="120.5" y="53.5" width="10" height="10" fill="none" stroke="#555" stroke-width="1"/><rect x="141" y="51" width="1" height="17" fill="#8a8a8a"/><path d="M153,59 q5,-5 10,0 q1,3 -2,6" fill="none" stroke="#3a3ab0" stroke-width="2"/><polygon points="151,57 157,57 152,63" fill="#3a3ab0"/><path d="M186,59 q-5,-5 -10,0 q-1,3 2,6" fill="none" stroke="#9a9a9a" stroke-width="2"/><polygon points="188,57 182,57 187,63" fill="#9a9a9a"/><rect x="195" y="51" width="1" height="17" fill="#8a8a8a"/><rect x="204.5" y="52.5" width="15" height="16" fill="#e6e6e6" stroke="#c8c8c8"/><path d="M208,54 v11 l3,-3 l2.5,5 l2,-1 l-2.5,-5 h4 z" fill="#fff" stroke="#222" stroke-width="1.1"/><rect x="224.5" y="48.5" width="88" height="22" fill="none" stroke="#ed1c24" stroke-width="3"/><g fill="#555"><polygon points="235,53 231.5,57 238.5,57"/><polygon points="235,67 231.5,63 238.5,63"/><polygon points="228,60 232,56.5 232,63.5"/><polygon points="242,60 238,56.5 238,63.5"/><rect x="234" y="56" width="2" height="8"/><rect x="231" y="59" width="8" height="2"/></g><path d="M257.5,54 a6.2,6.2 0 1 1 -5.5,3.5" fill="none" stroke="#555" stroke-width="2.6"/><polygon points="250,53 256,55 251,60" fill="#555"/><rect x="270.5" y="51.5" width="22" height="18" rx="3" fill="#d0d3da" stroke="#6d6d6d" stroke-width="1"/><rect x="271.5" y="52.5" width="20" height="8.5" rx="2" fill="#e4e6ea"/><rect x="275.5" y="54.5" width="13" height="12" fill="#666" stroke="#333"/><rect x="276" y="60" width="6" height="6" fill="#fff" stroke="#e04040" stroke-width="1"/><rect x="300.5" y="54.5" width="7" height="12" fill="#777" stroke="#444"/><rect x="302" y="60" width="3" height="6" fill="#fff" stroke="#e04040" stroke-width=".8"/><rect x="318" y="51" width="1" height="17" fill="#8a8a8a"/><rect x="324.5" y="50.5" width="59" height="20" rx="3" fill="url(#combo)" stroke="#8a8a8a"/><text x="328" y="65" font-family="Liberation Sans" font-size="12" fill="#000">World</text><polygon points="372.0,58.75 379.0,58.75 375.5,62.75" fill="#000"/><rect x="386" y="51" width="1" height="17" fill="#8a8a8a"/><g fill="#222"><rect x="396" y="55" width="4" height="4"/><rect x="404" y="55" width="4" height="4"/><rect x="395" y="58" width="6" height="8" rx="1"/><rect x="403" y="58" width="6" height="8" rx="1"/><rect x="400" y="59" width="4" height="3"/></g><g fill="#ccc"><rect x="396" y="63" width="2" height="2"/><rect x="404" y="63" width="2" height="2"/></g><rect x="417" y="51" width="1" height="17" fill="#8a8a8a"/><rect x="426" y="53" width="16" height="15" fill="#222"/><circle cx="434" cy="60.5" r="5.5" fill="#444" stroke="#777" stroke-width="1"/><text x="434" y="64" font-size="8" text-anchor="middle" fill="#ddd" font-family="Liberation Sans">U</text><rect x="448" y="51" width="1" height="17" fill="#8a8a8a"/><text x="456" y="67" font-family="Liberation Sans" font-weight="bold" font-size="15" fill="#0a4a10" stroke="#90e090" stroke-width=".6">K</text><path d="M466,62 l4,4 m0,-3 v3 h-3" fill="none" stroke="#0a4a10" stroke-width="1.5"/><rect x="478.5" y="52.5" width="21" height="16" rx="3" fill="#ececec" stroke="#8a8a8a" stroke-width="1"/><rect x="483" y="58" width="13" height="9" fill="#111"/><rect x="483" y="54" width="13" height="3.5" fill="#111" transform="rotate(-8 483 57)"/><rect x="483" y="59" width="13" height="1.5" fill="#fff"/><rect x="503" y="51" width="1" height="17" fill="#8a8a8a"/><rect x="509" y="50" width="80" height="20" fill="#ededed"/><rect x="515" y="57" width="64" height="2" fill="#b8b8b8"/><rect x="515" y="58" width="64" height="1" fill="#fff"/><path d="M576.5,52.5 h6 v8 l-3,2.5 l-3,-2.5 z" fill="#f4f4f4" stroke="#7a7a7a"/><rect x="591" y="51" width="1" height="17" fill="#8a8a8a"/><path d="M601,56 l4,-2 h10 v11 l-4,2.5 h-10 z" fill="#a8d0e8" stroke="#7ab0d0" stroke-width=".8" opacity=".9"/><rect x="602" y="57" width="9" height="9" fill="#c8e4f4" opacity=".8"/><path d="M623,58 q8,-6 16,0 q-8,3 -16,0z" fill="#888" stroke="#222" stroke-width="1"/><circle cx="631" cy="57.5" r="2" fill="#111"/><text x="622.5" y="68" font-family="Liberation Sans" font-weight="bold" font-size="9" fill="#000" textLength="16.5" lengthAdjust="spacingAndGlyphs">PIE</text><rect x="644.5" y="51.5" width="18" height="18" rx="3" fill="#d0d3da" stroke="#6d6d6d" stroke-width="1"/><rect x="645.5" y="52.5" width="16" height="8.5" rx="2" fill="#e4e6ea"/><rect x="647.5" y="54.5" width="12" height="12" fill="#5a8ad0" stroke="#1a3a9a" stroke-dasharray="1.5 1"/><circle cx="655" cy="60.5" r="4.5" fill="#1050d0" stroke="#0030a0" stroke-width="1"/><circle cx="655" cy="60.5" r="1.5" fill="#fff"/><rect x="664.5" y="51.5" width="21" height="18" rx="3" fill="#d0d3da" stroke="#6d6d6d" stroke-width="1"/><rect x="665.5" y="52.5" width="19" height="8.5" rx="2" fill="#e4e6ea"/><rect x="669.5" y="54.5" width="12" height="12" fill="#c04048" stroke="#111" stroke-width="1.2"/><line x1="669.5" y1="66.5" x2="681.5" y2="54.5" stroke="#111" stroke-width="1.4"/><rect x="687.5" y="51.5" width="22" height="18" rx="3" fill="#d0d3da" stroke="#6d6d6d" stroke-width="1"/><rect x="688.5" y="52.5" width="20" height="8.5" rx="2" fill="#e4e6ea"/><text x="691" y="67" font-family="Liberation Sans" font-weight="bold" font-size="17" fill="#0d3f30">P</text><path d="M715,61.5 h12 l-2.5,4.5 h-7 z" fill="#e00000"/><rect x="720.5" y="53" width="1.3" height="7" fill="#111"/><polygon points="718.5,57.5 723.8,57.5 721.1,60.5" fill="#111"/><rect x="736" y="53" width="16" height="15" fill="#111"/><circle cx="740" cy="57" r="1.5" fill="#3a6ad0"/><circle cx="748" cy="56.5" r="1.5" fill="#b040b0"/><circle cx="744" cy="60.5" r="1.5" fill="#c0a030"/><circle cx="740" cy="65" r="1.5" fill="#d04030"/><circle cx="748" cy="65" r="1.5" fill="#30b040"/><rect x="758" y="51" width="1" height="17" fill="#8a8a8a"/><polygon points="775.0,53 782,56.92 775.0,60.84 768,56.92" fill="#b8e8e0" stroke="#333" stroke-width=".8"/><polygon points="768,56.92 775.0,60.84 775.0,67 768,63.08" fill="#6ab0a4" stroke="#333" stroke-width=".8"/><polygon points="775.0,60.84 782,56.92 782,63.08 775.0,67" fill="#3a8078" stroke="#333" stroke-width=".8"/><rect x="790.5" y="51.5" width="16" height="18" fill="none" stroke="#ed1c24" stroke-width="3"/><circle cx="797.5" cy="59" r="3.5" fill="#d8f8f0" stroke="#6a9a90" stroke-width=".6"/><rect x="796" y="62" width="3" height="5" fill="#2a4a40"/><g stroke="#2a4a44" stroke-width="2"><line x1="815.5" y1="55.0" x2="819.5" y2="62"/><line x1="819.5" y1="62" x2="825.5" y2="56"/><line x1="819.5" y1="62" x2="824.5" y2="66"/><line x1="819.5" y1="62" x2="815.5" y2="66"/></g><circle cx="815.5" cy="55" r="2" fill="#3a6a64"/><circle cx="825.5" cy="56" r="2" fill="#3a6a64"/><circle cx="824.5" cy="66" r="2" fill="#3a6a64"/><circle cx="815.5" cy="66" r="2" fill="#3a6a64"/><g stroke="#2a4a44" stroke-width="2"><line x1="838.5" y1="55.0" x2="842.5" y2="62"/><line x1="842.5" y1="62" x2="848.5" y2="56"/><line x1="842.5" y1="62" x2="847.5" y2="66"/><line x1="842.5" y1="62" x2="838.5" y2="66"/></g><circle cx="838.5" cy="55" r="2" fill="#3a6a64"/><circle cx="848.5" cy="56" r="2" fill="#d02020"/><circle cx="847.5" cy="66" r="2" fill="#d02020"/><circle cx="838.5" cy="66" r="2" fill="#3a6a64"/><polygon points="865.0,53 871,56.36 865.0,59.72 859,56.36" fill="#b8e8e0" stroke="#333" stroke-width=".8"/><polygon points="859,56.36 865.0,59.72 865.0,65 859,61.64" fill="#6ab0a4" stroke="#333" stroke-width=".8"/><polygon points="865.0,59.72 871,56.36 871,61.64 865.0,65" fill="#3a8078" stroke="#333" stroke-width=".8"/><circle cx="871" cy="59" r="3.5" fill="#d8f8f0" stroke="#6a9a90" stroke-width=".6"/><rect x="869.5" y="62" width="3" height="5" fill="#2a4a40"/><circle cx="887" cy="58.5" r="4.5" fill="#eee" stroke="#333" stroke-width="1"/><rect x="885" y="62" width="4" height="5" fill="#333"/><path d="M890,65 q4,-3 8,0 q-4,2 -8,0z" fill="#333"/><rect x="904" y="51" width="1" height="17" fill="#8a8a8a"/><rect x="913.5" y="54.5" width="14" height="11" rx="1" fill="#ddd" stroke="#222" stroke-width="1.3"/><rect x="916" y="57" width="9" height="6" fill="#58d8e8"/><circle cx="943" cy="59" r="6" fill="#8a8a8a" stroke="#444" stroke-width="1"/><circle cx="942" cy="58.5" r="3" fill="#ccc"/><path d="M946,66 q4,-1 5,-5" fill="none" stroke="#8080d0" stroke-width="1"/><rect x="958" y="51" width="1" height="17" fill="#8a8a8a"/><rect x="971" y="53" width="5" height="5" rx="1.5" fill="#222"/><rect x="972" y="56" width="11" height="8" fill="#1a40d0" stroke="#222"/><rect x="968" y="63" width="15" height="4" fill="#222"/><circle cx="998" cy="55.5" r="2.5" fill="#222"/><rect x="997" y="57" width="2" height="6" fill="#222"/><path d="M991,68 L992,62 L1004,62 L1005,68 Z" fill="#222"/><rect x="992" y="63" width="3" height="2" fill="#777"/></svg>
<div class="a" style="left:81px;top:94px;width:870px;height:760px;background:#000;border:3px solid #ffff00"></div>
<div class="a" style="left:84px;top:97px;width:864px;height:754px;overflow:hidden;background:#000"><div style="position:absolute;left:0;top:0;width:1024px;height:1024px;transform-origin:0 0;transform:matrix3d(0.26425913,0.079599319,0,-0.00044301888,0.59051888,-0.11730862,0,0.00064033825,0,0,1,0,96.22247,392.86637,0,1);background:linear-gradient(90deg,rgba(0,0,0,.65) 0 1.0px,rgba(255,255,255,.10) 1.0px 3.0px,transparent 4.0px 60.0px,rgba(0,0,0,.15) 61.0px,rgba(0,0,0,.65) 63.0px),linear-gradient(0deg,rgba(0,0,0,.65) 0 1.0px,rgba(0,0,0,.12) 1.0px 3.0px,transparent 4.0px 60.0px,rgba(255,255,255,.10) 61.0px,rgba(0,0,0,.65) 63.0px),conic-gradient(#3d3db4 0 25%,#93939b 0 50%,#3d3db4 0 75%,#93939b 0);background-size:64px 64px,64px 64px,128px 128px;-webkit-mask-image:radial-gradient(circle 506px at 123px 203px,#000 0,#000 88%,transparent 100%),radial-gradient(320px 371px at 307px 211px,#000 0,rgba(0,0,0,.97) 15%,rgba(0,0,0,.82) 35%,rgba(0,0,0,.55) 55%,rgba(0,0,0,.28) 72%,rgba(0,0,0,.09) 87%,transparent 100%);mask-image:radial-gradient(circle 506px at 123px 203px,#000 0,#000 88%,transparent 100%),radial-gradient(320px 371px at 307px 211px,#000 0,rgba(0,0,0,.97) 15%,rgba(0,0,0,.82) 35%,rgba(0,0,0,.55) 55%,rgba(0,0,0,.28) 72%,rgba(0,0,0,.09) 87%,transparent 100%);-webkit-mask-composite:source-in;mask-composite:intersect"></div><div style="position:absolute;left:0;top:0;width:1024px;height:1024px;transform-origin:0 0;transform:matrix3d(0.26425913,0.079599319,0,-0.00044301888,0.59051888,-0.11730862,0,0.00064033825,0,0,1,0,96.22247,392.86637,0,1);background:linear-gradient(90deg,rgba(0,0,0,.65) 0 1.0px,rgba(255,255,255,.10) 1.0px 3.0px,transparent 4.0px 60.0px,rgba(0,0,0,.15) 61.0px,rgba(0,0,0,.65) 63.0px),linear-gradient(0deg,rgba(0,0,0,.65) 0 1.0px,rgba(0,0,0,.12) 1.0px 3.0px,transparent 4.0px 60.0px,rgba(255,255,255,.10) 61.0px,rgba(0,0,0,.65) 63.0px),conic-gradient(#3d3db4 0 25%,#93939b 0 50%,#3d3db4 0 75%,#93939b 0);background-size:64px 64px,64px 64px,128px 128px;-webkit-mask-image:radial-gradient(circle 301px at 851px 698px,#000 0,rgba(0,0,0,.95) 15%,rgba(0,0,0,.8) 35%,rgba(0,0,0,.55) 58%,rgba(0,0,0,.3) 78%,rgba(0,0,0,.1) 92%,transparent 100%);mask-image:radial-gradient(circle 301px at 851px 698px,#000 0,rgba(0,0,0,.95) 15%,rgba(0,0,0,.8) 35%,rgba(0,0,0,.55) 58%,rgba(0,0,0,.3) 78%,rgba(0,0,0,.1) 92%,transparent 100%)"></div><div style="position:absolute;left:0;top:0;width:1024px;height:1024px;transform-origin:0 0;transform:matrix3d(0.26425913,0.079599319,0,-0.00044301888,0.59051888,-0.11730862,0,0.00064033825,0,0,1,0,96.22247,392.86637,0,1);background:radial-gradient(circle 160px at 320px 192px,rgba(255,255,255,0.04),rgba(255,255,255,0)),radial-gradient(circle 141px at 826px 627px,rgba(255,255,255,0.2),rgba(255,255,255,0));mix-blend-mode:screen"></div><svg width="864" height="754" style="left:0;top:0" viewBox="84 97 864 754"><defs><radialGradient id="bulba" cx="50%" cy="45%" r="60%"><stop offset="0" stop-color="#808080"/><stop offset=".8" stop-color="#5e5e5e"/><stop offset="1" stop-color="#4a4a4a"/></radialGradient><radialGradient id="gsph" cx="45%" cy="40%" r="60%"><stop offset="0" stop-color="#3ad83a"/><stop offset=".7" stop-color="#1ca01c"/><stop offset="1" stop-color="#0a5a0a"/></radialGradient></defs><line x1="84" y1="198.9" x2="410.6" y2="97" stroke="#0a0a4c" stroke-width="1" /><line x1="84" y1="205.8" x2="378.8" y2="350" stroke="#1414c0" stroke-width="1" /><line x1="410.6" y1="97" x2="441.4" y2="302.2" stroke="#07073c" stroke-width="1" /><line x1="501" y1="97" x2="948" y2="177.4" stroke="#0a0a4c" stroke-width="1" /><line x1="852.9" y1="97" x2="671.6" y2="316.7" stroke="#1212b0" stroke-width="1" /><line x1="233.5" y1="851" x2="386.2" y2="664.5" stroke="#1414c0" stroke-width="1" /><line x1="84" y1="627.3" x2="217.8" y2="525.2" stroke="#0a0a4c" stroke-width="1" /><line x1="859.6" y1="531" x2="948.6" y2="568.3" stroke="#0a0a4c" stroke-width="1" /><line x1="847.6" y1="579" x2="948" y2="625" stroke="#1414c0" stroke-width="1" /><polygon points="180.4,490.4 507.5,261.3 891.5,391.5 881.3,403.5 507.5,273.0 193.4,500.5" fill="#000" /><polyline points="180.4,490.4 507.5,261.3 891.5,391.5 757.8,967.4" fill="none" stroke="#800000" stroke-width="1" /><polyline points="180.4,490.4 613.0,851.0" fill="none" stroke="#800000" stroke-width="1" /><polyline points="193.4,500.5 507.5,273.0 881.3,403.5 741.9,958.6" fill="none" stroke="#800000" stroke-width="1" /><polyline points="193.4,500.5 741.9,958.6" fill="none" stroke="#800000" stroke-width="1" /><line x1="507.5" y1="261.3" x2="507.5" y2="273" stroke="#800000" stroke-width="1" /><line x1="891.5" y1="391.5" x2="881.3" y2="403.5" stroke="#800000" stroke-width="1" /><line x1="180.4" y1="490.4" x2="193.4" y2="500.5" stroke="#800000" stroke-width="1" /><path d="M624.8,391.2 C624.6,388.3 623.4,380.0 623.6,373.8 C623.8,367.6 624.7,360.5 626.1,353.9 C627.5,347.3 628.8,342.0 632.3,334.1 C635.8,326.2 641.4,315.1 647.2,306.8 C653.0,298.5 658.3,292.3 667.0,284.4 C675.7,276.5 688.5,266.6 699.3,259.6 C710.1,252.6 721.7,247.0 731.6,242.2 C741.5,237.4 751.0,233.7 758.9,231.0 C766.8,228.3 770.4,228.1 778.8,226.1 C787.1,224.1 794.0,221.1 809.0,219.1 C824.0,217.1 851.4,214.5 868.7,214.2 C886.0,213.9 899.5,215.5 912.9,217.3 C926.3,219.1 943.2,223.8 949.2,225.1" fill="none" stroke="#b4dfee" stroke-width="1"/><path d="M948.6,390.0 C942.6,386.1 925.4,374.0 912.9,366.6 C900.4,359.2 886.9,351.9 873.9,345.8 C860.9,339.8 850.8,335.4 834.9,330.3 C819.0,325.2 793.9,318.0 778.8,315.4 C763.6,312.8 755.6,314.3 744.0,314.7 C732.4,315.1 719.6,316.5 709.2,317.9 C698.9,319.3 689.8,321.0 681.9,322.9 C674.0,324.8 668.7,326.2 662.1,329.1 C655.5,332.0 648.0,336.4 642.2,340.3 C636.4,344.2 631.8,347.5 627.3,352.7 C622.8,357.9 617.8,364.9 614.9,371.3 C612.0,377.7 610.8,386.4 609.9,391.2 C609.0,396.0 608.9,393.7 609.6,400.0 C610.4,406.3 612.0,420.0 614.4,428.8 C616.8,437.6 619.6,444.5 624.0,452.9 C628.4,461.3 633.7,470.5 640.9,479.3 C648.1,488.1 657.3,497.0 667.3,505.8 C677.3,514.6 689.0,524.2 701.0,532.2 C713.0,540.2 725.0,546.4 739.4,553.8 C753.8,561.2 770.7,570.7 787.5,576.7 C804.3,582.7 823.6,586.8 840.4,589.9 C857.2,593.0 870.5,595.6 888.5,595.2 C906.5,594.8 938.6,588.8 948.6,587.5" fill="none" stroke="#b4dfee" stroke-width="1"/><path d="M856.0,546.6 C861.7,545.8 879.3,543.3 890.0,542.0 C900.7,540.7 910.2,540.0 920.0,539.0 C929.8,538.0 943.8,536.3 948.6,535.8" fill="none" stroke="#b4dfee" stroke-width="1"/><path d="M816.3,352.5 C819.8,345.8 827.9,327.9 837.5,312.1 C847.1,296.3 861.8,272.6 873.9,257.5 C886.0,242.3 900.6,229.3 910.3,221.2 C920.0,213.1 928.4,210.8 932.0,208.7" fill="none" stroke="#b4dfee" stroke-width="1"/><path d="M932.0,208.7 C932.4,209.9 935.2,208.3 934.2,216.0 C933.2,223.7 930.7,240.6 925.8,254.9 C920.9,269.2 913.6,284.8 905.0,301.7 C896.4,318.6 883.9,339.8 873.9,356.2 C863.9,372.6 857.5,381.9 845.2,400.0 C832.9,418.1 814.2,445.0 800.0,465.0 C785.8,485.0 773.7,501.6 760.0,520.0 C746.3,538.4 724.8,566.2 717.8,575.5" fill="none" stroke="#b4dfee" stroke-width="1"/><polyline points="701.8,383.7 794.0,418.0" fill="none" stroke="#e8e800" stroke-width="1" /><polyline points="849.5,340.3 807.6,400.0 785.3,435.1" fill="none" stroke="#e8e800" stroke-width="1" /><polyline points="812.8,370.0 802.5,400.0 785.3,435.1" fill="none" stroke="#e8e800" stroke-width="1" /><polygon points="685.6,368.8 705.5,371.3 699.3,391.2 683.2,388.7" fill="#e60000" /><polygon points="855.7,311.3 877.8,317.3 864.8,343.8 841.4,336.8" fill="#e60000" /><polygon points="816.8,352.3 830.3,357.5 823.2,371.8 805.1,368.7" fill="#e60000" /><rect x="790.5" y="419" width="7.5" height="15.5" rx="3" fill="#0f7a0f"/><circle cx="794" cy="412.8" r="9.7" fill="url(#gsph)"/><text x="793.8" y="417" font-family="Liberation Serif" font-weight="bold" font-size="11" fill="#000" text-anchor="middle">S</text><ellipse cx="794.7" cy="418.2" rx="20.5" ry="14" transform="rotate(12 794.7 418.2)" fill="none" stroke="#f0f000" stroke-width="1.3"/><ellipse cx="792" cy="416" rx="18" ry="7" transform="rotate(38 792 416)" fill="none" stroke="#f0f000" stroke-width="1.2"/><line x1="784.8" y1="418.5" x2="802.9" y2="418.5" stroke="#e00000" stroke-width="1.2" /><line x1="794.5" y1="409.7" x2="794.5" y2="427.8" stroke="#e00000" stroke-width="1.2" /><g transform="translate(325.9,279.6) scale(1.0)"><polygon points="12,-1 28,-14.5 28,16" fill="#dcdce8"/><ellipse cx="13" cy="1" rx="3.2" ry="8.5" fill="#c4c4d0"/><path d="M-6,10 L6,10 L5.5,16 L5,28 Q0,34 -5,28 L-5.5,16 Z" fill="#7a7a7a"/><rect x="-5" y="16" width="10.5" height="2" fill="#d8d8d8"/><rect x="-5" y="20" width="10.5" height="2" fill="#c8c8c8"/><rect x="-5" y="24" width="10" height="2" fill="#b8b8b8"/><rect x="-3" y="29" width="6" height="2" fill="#9a9a9a"/><circle cx="0" cy="0" r="14.5" fill="url(#bulba)"/><text x="0" y="6.5" font-family="Liberation Sans" font-weight="bold" font-size="19" fill="#e4e4ee" text-anchor="middle">S</text></g><polyline points="317.4,315.1 339.0,323.6 355.1,310.9" fill="none" stroke="#a8d8f8" stroke-width="1" /><polyline points="333.1,302.4 339.0,323.6 337.3,303.3" fill="none" stroke="#a8d8f8" stroke-width="1" /><line x1="313.2" y1="288" x2="313.2" y2="302.4" stroke="#ffffff" stroke-width="1" stroke-dasharray="1.5 2"/><g fill="none" stroke-width="1" shape-rendering="crispEdges"><path d="M110.5,823.5 L91.5,813.5 M94.5,808.5 L100.5,816.5 M100.5,808.5 L94.5,816.5" stroke="#ff1010"/><path d="M110.5,823.5 V809 M114,804.5 H121 L114,812.5 H121" stroke="#1010ff"/><path d="M110.5,823.5 L124.5,808 M128.5,803.5 L131.5,807.5 L134.5,803.5 M131.5,807.5 V812" stroke="#10ff10"/></g><rect x="402.5" y="170.5" width="105" height="44" fill="none" stroke="#ed1c24" stroke-width="3"/><rect x="536.5" y="174" width="92" height="43" fill="none" stroke="#ed1c24" stroke-width="3"/><rect x="678.5" y="121.5" width="107" height="48" fill="none" stroke="#ed1c24" stroke-width="3"/><line x1="629.8" y1="216.1" x2="812.9" y2="358.8" stroke="#ed1c24" stroke-width="3" /><path d="M427.6,174.9 L412.4,182.3 L412.4,188.9 L417.3,186.4 L416.5,204.6 L424,202.9 L426.4,201.3 Z" fill="#ed1c24"/><path d="M546.1,187.5 C548,183 550,179.3 552.6,179.3 L558.3,179 C562,180 565,183 565,186.4 C565,192 561,197 558.3,200.5 L567.3,202.2 L563.3,208.9 L556.6,208.9 C554,208 552,207.2 550.9,207.2 L546.1,207 L554.3,196.5 C555.5,194 556,191 555.4,190.3 C555,188 553.5,186.9 552.6,186.9 C550,186.9 548,187 546.1,187.5 Z" fill="#ed1c24"/><path d="M695.5,129.3 L713.2,129.3 L702.2,143 C706,143 708.9,143.6 708.9,143.6 C711,145 712.6,147 712.6,148.5 C712.6,152 711.5,155 710.8,156.4 C708.5,159 706.5,160.7 704.7,160.7 L693.4,160.7 C696,160 698.6,158.9 698.6,158.9 C700.5,157 702.2,154.6 702.2,154.6 C702.5,152 701.9,149.7 701.9,149.7 C700,148.5 696.7,148.5 696.7,148.5 L706.5,136.3 L694.3,136.9 Z" fill="#ed1c24"/><path d="M812.9,362.7 l0,17 l4,-4 l3,6.5 l2.5,-1 l-3,-6.5 l5.5,0 z" fill="#fff" stroke="#000" stroke-width="1"/></svg></div>
<svg width="490" height="434" style="left:957px;top:94px" viewBox="957 94 490 434" shape-rendering="crispEdges"><rect x="957" y="94" width="490" height="434" fill="#a4a4a4"/><rect x="967" y="94" width="1" height="434" fill="#8e8e8e"/><rect x="990" y="94" width="1" height="434" fill="#8e8e8e"/><rect x="1014" y="94" width="1" height="434" fill="#787878"/><rect x="1037" y="94" width="1" height="434" fill="#8e8e8e"/><rect x="1061" y="94" width="1" height="434" fill="#8e8e8e"/><rect x="1084" y="94" width="1" height="434" fill="#8e8e8e"/><rect x="1108" y="94" width="1" height="434" fill="#8e8e8e"/><rect x="1131" y="94" width="1" height="434" fill="#8e8e8e"/><rect x="1155" y="94" width="1" height="434" fill="#8e8e8e"/><rect x="1178" y="94" width="1" height="434" fill="#8e8e8e"/><rect x="1202" y="94" width="1" height="434" fill="#787878"/><rect x="1225" y="94" width="1" height="434" fill="#8e8e8e"/><rect x="1249" y="94" width="1" height="434" fill="#8e8e8e"/><rect x="1272" y="94" width="1" height="434" fill="#8e8e8e"/><rect x="1296" y="94" width="1" height="434" fill="#8e8e8e"/><rect x="1319" y="94" width="1" height="434" fill="#8e8e8e"/><rect x="1343" y="94" width="1" height="434" fill="#8e8e8e"/><rect x="1366" y="94" width="1" height="434" fill="#8e8e8e"/><rect x="1390" y="94" width="1" height="434" fill="#787878"/><rect x="1413" y="94" width="1" height="434" fill="#8e8e8e"/><rect x="1437" y="94" width="1" height="434" fill="#8e8e8e"/><rect x="957" y="99" width="490" height="1" fill="#8e8e8e"/><rect x="957" y="123" width="490" height="1" fill="#787878"/><rect x="957" y="146" width="490" height="1" fill="#8e8e8e"/><rect x="957" y="170" width="490" height="1" fill="#8e8e8e"/><rect x="957" y="193" width="490" height="1" fill="#8e8e8e"/><rect x="957" y="217" width="490" height="1" fill="#8e8e8e"/><rect x="957" y="240" width="490" height="1" fill="#8e8e8e"/><rect x="957" y="264" width="490" height="1" fill="#8e8e8e"/><rect x="957" y="287" width="490" height="1" fill="#8e8e8e"/><rect x="957" y="311" width="490" height="1" fill="#787878"/><rect x="957" y="334" width="490" height="1" fill="#8e8e8e"/><rect x="957" y="358" width="490" height="1" fill="#8e8e8e"/><rect x="957" y="381" width="490" height="1" fill="#8e8e8e"/><rect x="957" y="405" width="490" height="1" fill="#8e8e8e"/><rect x="957" y="428" width="490" height="1" fill="#8e8e8e"/><rect x="957" y="452" width="490" height="1" fill="#8e8e8e"/><rect x="957" y="475" width="490" height="1" fill="#8e8e8e"/><rect x="957" y="499" width="490" height="1" fill="#787878"/><rect x="957" y="522" width="490" height="1" fill="#8e8e8e"/></svg><svg width="490" height="434" style="left:957px;top:94px;overflow:hidden" viewBox="957 94 490 434"><defs><radialGradient id="bulbb" cx="50%" cy="50%" r="60%"><stop offset="0" stop-color="#686868"/><stop offset="1" stop-color="#444"/></radialGradient><radialGradient id="gsph2" cx="30%" cy="35%" r="70%"><stop offset="0" stop-color="#6fdc6f"/><stop offset="1" stop-color="#0d6a0d"/></radialGradient></defs><circle cx="1337.5" cy="561" r="237.5" fill="none" stroke="#b8e6f0" stroke-width="1"/><line x1="1337.5" y1="323.5" x2="1337.5" y2="450" stroke="#b8e6f0" stroke-width="1" /><line x1="1337.5" y1="466" x2="1337.5" y2="528" stroke="#ff0000" stroke-width="1"/><rect x="1330" y="450" width="16" height="16" fill="#ff0000"/><g transform="translate(1002.5,147.7) scale(0.86)"><polygon points="12,-1 28,-14.5 28,16" fill="#f8f8f8"/><ellipse cx="13" cy="1" rx="3.2" ry="8.5" fill="#c4c4d0"/><path d="M-6,10 L6,10 L5.5,16 L5,28 Q0,34 -5,28 L-5.5,16 Z" fill="#404040"/><rect x="-5" y="16" width="10.5" height="2" fill="#d8d8d8"/><rect x="-5" y="20" width="10.5" height="2" fill="#c8c8c8"/><rect x="-5" y="24" width="10" height="2" fill="#b8b8b8"/><rect x="-3" y="29" width="6" height="2" fill="#9a9a9a"/><circle cx="0" cy="0" r="14.5" fill="url(#bulbb)"/><text x="0" y="6.5" font-family="Liberation Sans" font-weight="bold" font-size="19" fill="#e4e4ee" text-anchor="middle">S</text></g><polyline points="991.8,167.3 999.0,161.0" fill="none" stroke="#a8d8f8" stroke-width="1" /><polyline points="1015.9,167.3 1009.6,160.2" fill="none" stroke="#a8d8f8" stroke-width="1" /></svg><svg width="490" height="298" style="left:957px;top:556px" viewBox="957 556 490 298" shape-rendering="crispEdges"><rect x="957" y="556" width="490" height="298" fill="#a4a4a4"/><rect x="967" y="556" width="1" height="298" fill="#8e8e8e"/><rect x="990" y="556" width="1" height="298" fill="#8e8e8e"/><rect x="1014" y="556" width="1" height="298" fill="#787878"/><rect x="1037" y="556" width="1" height="298" fill="#8e8e8e"/><rect x="1061" y="556" width="1" height="298" fill="#8e8e8e"/><rect x="1084" y="556" width="1" height="298" fill="#8e8e8e"/><rect x="1108" y="556" width="1" height="298" fill="#8e8e8e"/><rect x="1131" y="556" width="1" height="298" fill="#8e8e8e"/><rect x="1155" y="556" width="1" height="298" fill="#8e8e8e"/><rect x="1178" y="556" width="1" height="298" fill="#8e8e8e"/><rect x="1202" y="556" width="1" height="298" fill="#787878"/><rect x="1225" y="556" width="1" height="298" fill="#8e8e8e"/><rect x="1249" y="556" width="1" height="298" fill="#8e8e8e"/><rect x="1272" y="556" width="1" height="298" fill="#8e8e8e"/><rect x="1296" y="556" width="1" height="298" fill="#8e8e8e"/><rect x="1319" y="556" width="1" height="298" fill="#8e8e8e"/><rect x="1343" y="556" width="1" height="298" fill="#8e8e8e"/><rect x="1366" y="556" width="1" height="298" fill="#8e8e8e"/><rect x="1390" y="556" width="1" height="298" fill="#787878"/><rect x="1413" y="556" width="1" height="298" fill="#8e8e8e"/><rect x="1437" y="556" width="1" height="298" fill="#8e8e8e"/><rect x="957" y="564" width="490" height="1" fill="#8e8e8e"/><rect x="957" y="587" width="490" height="1" fill="#8e8e8e"/><rect x="957" y="611" width="490" height="1" fill="#8e8e8e"/><rect x="957" y="634" width="490" height="1" fill="#8e8e8e"/><rect x="957" y="658" width="490" height="1" fill="#8e8e8e"/><rect x="957" y="681" width="490" height="1" fill="#8e8e8e"/><rect x="957" y="705" width="490" height="1" fill="#787878"/><rect x="957" y="728" width="490" height="1" fill="#8e8e8e"/><rect x="957" y="752" width="490" height="1" fill="#8e8e8e"/><rect x="957" y="775" width="490" height="1" fill="#8e8e8e"/><rect x="957" y="799" width="490" height="1" fill="#8e8e8e"/><rect x="957" y="822" width="490" height="1" fill="#8e8e8e"/><rect x="957" y="846" width="490" height="1" fill="#8e8e8e"/></svg><svg width="490" height="298" style="left:957px;top:556px;overflow:hidden" viewBox="957 556 490 298"><defs><radialGradient id="bulbb" cx="50%" cy="50%" r="60%"><stop offset="0" stop-color="#686868"/><stop offset="1" stop-color="#444"/></radialGradient><radialGradient id="gsph2" cx="30%" cy="35%" r="70%"><stop offset="0" stop-color="#6fdc6f"/><stop offset="1" stop-color="#0d6a0d"/></radialGradient></defs><circle cx="955" cy="625.7" r="235.7" fill="none" stroke="#b8e6f0" stroke-width="1"/><rect x="957" y="692" width="491" height="1" fill="#6e0000"/><rect x="957" y="718" width="491" height="1" fill="#6e0000"/><line x1="1064" y1="625.5" x2="1190" y2="625.5" stroke="#b8e6f0" stroke-width="1"/><line x1="968" y1="625.5" x2="1048" y2="625.5" stroke="#ff0000" stroke-width="1"/><line x1="957" y1="625.5" x2="968" y2="625.5" stroke="#b8e6f0" stroke-width="1"/><rect x="1048" y="617" width="16" height="16" fill="#ff0000"/><circle cx="952" cy="625.5" r="23.5" fill="none" stroke="#f0e000" stroke-width="1.2"/><ellipse cx="955" cy="617" rx="9" ry="11" fill="url(#gsph2)"/><rect x="957" y="617" width="3" height="16" fill="#ff0000"/></svg>
<svg width="1456" height="886" style="left:0;top:0" viewBox="0 0 1456 886"><line x1="295" y1="71" x2="424.3" y2="169" stroke="#ed1c24" stroke-width="3" /><line x1="789.4" y1="70" x2="723.9" y2="120" stroke="#ed1c24" stroke-width="3" /></svg>
<svg width="1456" height="40" style="left:0;top:850px" viewBox="0 850 1456 40"><rect x="8" y="854" width="1440" height="24" fill="#f0f0f0"/><rect x="8" y="855" width="1440" height="1" fill="#8c8c8c"/><rect x="8" y="854" width="1440" height="1" fill="#e6e6e6"/><rect x="10.5" y="859.5" width="346" height="18" fill="#fff" stroke="#d0d0d8"/><polygon points="344.5,867.75 353.5,867.75 349,872.75" fill="#000"/><rect x="358" y="857" width="1" height="20" fill="#d0d0d0"/><rect x="361.5" y="858.5" width="28" height="18" rx="3" fill="url(#sbtn)" stroke="#8a8a8a"/><rect x="393.5" y="858.5" width="28" height="18" rx="3" fill="url(#sbtn)" stroke="#8a8a8a"/><rect x="425.5" y="858.5" width="28" height="18" rx="3" fill="url(#sbtn)" stroke="#8a8a8a"/><g stroke="#333" stroke-width="2"><line x1="369" y1="865" x2="382" y2="865"/><line x1="369" y1="869" x2="382" y2="869"/></g><g stroke="#9ad" stroke-width="1"><line x1="369" y1="865" x2="382" y2="865"/><line x1="369" y1="869" x2="382" y2="869"/></g><g stroke="#e00" stroke-width="1.6"><line x1="368" y1="861" x2="381" y2="873"/><line x1="381" y1="861" x2="368" y2="873"/></g><circle cx="405" cy="865" r="3.5" fill="#cfeff0"/><rect x="404" y="868" width="3" height="7" fill="#2a4a40"/><rect x="408" y="860" width="2" height="8" fill="#f0b000"/><rect x="408" y="869" width="2" height="2" fill="#f0b000"/><path d="M430,865 l6,-3 h8 v9 l-6,3 h-8z" fill="#555" stroke="#222" stroke-width=".8"/><path d="M440,869 l3,4 l7,-9" fill="none" stroke="#111" stroke-width="4"/><path d="M440,869 l3,4 l7,-9" fill="none" stroke="#20e020" stroke-width="2.4"/><rect x="456" y="857" width="1" height="20" fill="#d0d0d0"/><text x="460" y="872" font-family="Liberation Sans" font-size="12" fill="#000" textLength="160" lengthAdjust="spacingAndGlyphs">Current Level:&#160; Persistent Level</text><rect x="669" y="857" width="1" height="20" fill="#d6d6d6"/><rect x="777" y="857" width="1" height="20" fill="#d6d6d6"/><text x="669.5" y="871.5" font-family="Liberation Sans" font-size="12" fill="#000" textLength="139.5" lengthAdjust="spacingAndGlyphs">Persistent Level.PointLight_2</text><rect x="887.5" y="858.5" width="60" height="18" rx="2" fill="#fff" stroke="#dadada"/><text x="891" y="872" font-family="Liberation Sans" font-size="12" fill="#000" textLength="32" lengthAdjust="spacingAndGlyphs">1.0000</text><rect x="949.5" y="858.5" width="60" height="18" rx="2" fill="#fff" stroke="#dadada"/><text x="953" y="872" font-family="Liberation Sans" font-size="12" fill="#000" textLength="32" lengthAdjust="spacingAndGlyphs">1.0000</text><rect x="1011.5" y="858.5" width="60" height="18" rx="2" fill="#fff" stroke="#dadada"/><text x="1015" y="872" font-family="Liberation Sans" font-size="12" fill="#000" textLength="32" lengthAdjust="spacingAndGlyphs">1.0000</text><rect x="1073.5" y="858.5" width="60" height="18" rx="2" fill="#fff" stroke="#dadada"/><text x="1077" y="872" font-family="Liberation Sans" font-size="12" fill="#000" textLength="32" lengthAdjust="spacingAndGlyphs">1.0000</text><rect x="1135" y="857" width="1" height="20" fill="#d0d0d0"/><g fill="#222"><rect x="1138" y="861" width="1" height="13"/><rect x="1138" y="873" width="13" height="1"/><rect x="1141" y="865" width="1" height="8"/><rect x="1144" y="868" width="1" height="5"/><rect x="1138" y="865" width="7" height="1"/><rect x="1138" y="869" width="10" height="1"/></g><text x="1152" y="871" font-family="Liberation Sans" font-size="12" fill="#000">32</text><rect x="1179.5" y="860.5" width="12" height="12" fill="url(#chk)" stroke="#8e8f8f"/><rect x="1195.5" y="858.5" width="10" height="17" rx="2" fill="url(#sbtn)" stroke="#8a8a8a"/><polygon points="1198.0,866.25 1203.0,866.25 1200.5,869.25" fill="#000"/><rect x="1212" y="857" width="1" height="20" fill="#d0d0d0"/><path d="M1216,873 L1222,861 L1227,873 Z" fill="none" stroke="#111" stroke-width="1.3"/><line x1="1214" y1="873" x2="1229" y2="873" stroke="#111"/><polygon points="1223,870 1228,870 1225.5,874" fill="#111"/><text x="1230" y="871" font-family="Liberation Sans" font-size="12" fill="#000">~6</text><rect x="1257.5" y="860.5" width="12" height="12" fill="url(#chk)" stroke="#8e8f8f"/><rect x="1273.5" y="858.5" width="10" height="17" rx="2" fill="url(#sbtn)" stroke="#8a8a8a"/><polygon points="1276.0,866.25 1281.0,866.25 1278.5,869.25" fill="#000"/><rect x="1292" y="857" width="1" height="20" fill="#d0d0d0"/><text x="1295" y="871" font-family="Liberation Sans" font-size="12" fill="#000">5%</text><rect x="1328.5" y="860.5" width="12" height="12" fill="url(#chk)" stroke="#8e8f8f"/><path d="M1331,866 l2.5,3.5 l5,-7" fill="none" stroke="#4a5ac8" stroke-width="1.6"/><rect x="1344.5" y="858.5" width="10" height="17" rx="2" fill="url(#sbtn)" stroke="#8a8a8a"/><polygon points="1347.0,866.25 1352.0,866.25 1349.5,869.25" fill="#000"/><rect x="1362" y="857" width="1" height="20" fill="#d0d0d0"/><rect x="1367" y="860" width="14" height="14" fill="#8a8a50" stroke="#333" stroke-width=".8"/><rect x="1370" y="861" width="8" height="5" fill="#ddd"/><path d="M1371,868 l3,4 l7,-9" fill="none" stroke="#111" stroke-width="4"/><path d="M1371,868 l3,4 l7,-9" fill="none" stroke="#20e020" stroke-width="2.4"/><rect x="1386" y="857" width="1" height="20" fill="#d0d0d0"/><rect x="1394.5" y="860.5" width="12" height="12" fill="url(#chk)" stroke="#8e8f8f"/><path d="M1397,866 l2.5,3.5 l5,-7" fill="none" stroke="#4a5ac8" stroke-width="1.6"/><rect x="1411.5" y="858.5" width="10" height="17" rx="2" fill="url(#sbtn)" stroke="#8a8a8a"/><polygon points="1414.0,866.25 1419.0,866.25 1416.5,869.25" fill="#000"/><defs><linearGradient id="sbtn" x1="0" y1="0" x2="0" y2="1"><stop offset="0" stop-color="#f4f4f4"/><stop offset=".5" stop-color="#ebebeb"/><stop offset=".52" stop-color="#dddddd"/><stop offset="1" stop-color="#cfcfcf"/></linearGradient><linearGradient id="chk" x1="0" y1="0" x2="1" y2="1"><stop offset="0" stop-color="#cbcfd5"/><stop offset="1" stop-color="#f6f6f6"/></linearGradient></defs></svg>
<svg width="1456" height="30" style="left:0;top:0" viewBox="0 0 1456 30"><defs><linearGradient id="wbtn" x1="0" y1="0" x2="0" y2="1"><stop offset="0" stop-color="#d6e4f4"/><stop offset=".45" stop-color="#bcd0ea"/><stop offset=".5" stop-color="#a4bcdc"/><stop offset="1" stop-color="#b8d0ec"/></linearGradient><linearGradient id="cbtn" x1="0" y1="0" x2="0" y2="1"><stop offset="0" stop-color="#e8a090"/><stop offset=".45" stop-color="#d47060"/><stop offset=".5" stop-color="#c04030"/><stop offset="1" stop-color="#d86050"/></linearGradient></defs><path d="M12,10 h12 v10 l-6,4 l-6,-4 z" fill="#111"/><text x="13.5" y="18.5" font-size="8" font-family="Liberation Sans" font-weight="bold" fill="#fff" textLength="9" lengthAdjust="spacingAndGlyphs">UDK</text><rect x="15.5" y="20" width="5" height="1" fill="#e03030"/><rect x="1358.5" y="10.5" width="27" height="14" rx="2.5" fill="url(#wbtn)" stroke="#6d7f9a"/><rect x="1366" y="17" width="11" height="3.5" rx="1" fill="#f4f4f4" stroke="#555" stroke-width=".8"/><rect x="1388.5" y="10.5" width="27" height="14" rx="2.5" fill="url(#wbtn)" stroke="#6d7f9a"/><rect x="1398" y="13" width="8" height="6" fill="none" stroke="#333" stroke-width="2.2"/><rect x="1398" y="13" width="8" height="6" fill="none" stroke="#eee" stroke-width="1"/><rect x="1395" y="16" width="8" height="6" fill="#c8d8ec" stroke="#333" stroke-width="2.2"/><rect x="1395" y="16" width="8" height="6" fill="none" stroke="#eee" stroke-width="1"/><rect x="1418.5" y="10.5" width="27" height="14" rx="2.5" fill="url(#cbtn)" stroke="#5a1a1a"/><g stroke="#333" stroke-width="3.4"><line x1="1427" y1="13.5" x2="1437" y2="21.5"/><line x1="1437" y1="13.5" x2="1427" y2="21.5"/></g><g stroke="#f4f4f4" stroke-width="2"><line x1="1427" y1="13.5" x2="1437" y2="21.5"/><line x1="1437" y1="13.5" x2="1427" y2="21.5"/></g></svg>
<svg width="1456" height="10" style="left:0;top:876px" viewBox="0 876 1456 10"><defs><linearGradient id="tbar" x1="0" y1="0" x2="0" y2="1"><stop offset="0" stop-color="#3c3c3c"/><stop offset=".2" stop-color="#8a8c8c"/><stop offset=".4" stop-color="#7a7c7c"/><stop offset="1" stop-color="#5a5c5c"/></linearGradient><radialGradient id="orb" cx="50%" cy="30%" r="60%"><stop offset="0" stop-color="#c8e8f8"/><stop offset=".6" stop-color="#4a8ab8"/><stop offset="1" stop-color="#1a3a58"/></radialGradient></defs><rect x="8" y="878" width="1440" height="8" fill="url(#tbar)"/><rect x="1218" y="882" width="8" height="4" fill="none" stroke="#ddd" stroke-width="1"/><rect x="1249" y="883" width="15" height="3" fill="#6a9ad8"/><rect x="1301" y="884" width="18" height="2" fill="#e02020"/><rect x="1321" y="883" width="16" height="3" fill="#8a0000"/><circle cx="1348" cy="888" r="5" fill="#e84040" stroke="#fff" stroke-width="1"/><rect x="1372" y="884" width="9" height="2" fill="#2a5ab8" stroke="#fff" stroke-width=".5"/><circle cx="37" cy="897" r="20" fill="url(#orb)" stroke="#222" stroke-width="1"/><path d="M30,886 q3,-6 7,-4 v5 q-4,-2 -7,-1z" fill="#e85020"/><path d="M38,882 q4,-2 8,2 v4 q-4,-3 -8,-1z" fill="#40b040"/><rect x="170.5" y="880.5" width="155" height="10" rx="3" fill="#7e8080" stroke="#444"/><rect x="333.5" y="880.5" width="152" height="10" rx="3" fill="#7e8080" stroke="#444"/><rect x="490.5" y="880.5" width="155" height="10" rx="3" fill="#2a2a2a" stroke="#444"/><rect x="178" y="882" width="6" height="4" fill="#d8b860"/><rect x="341" y="882" width="6" height="4" fill="#d8b860"/></svg>
</body></html>
